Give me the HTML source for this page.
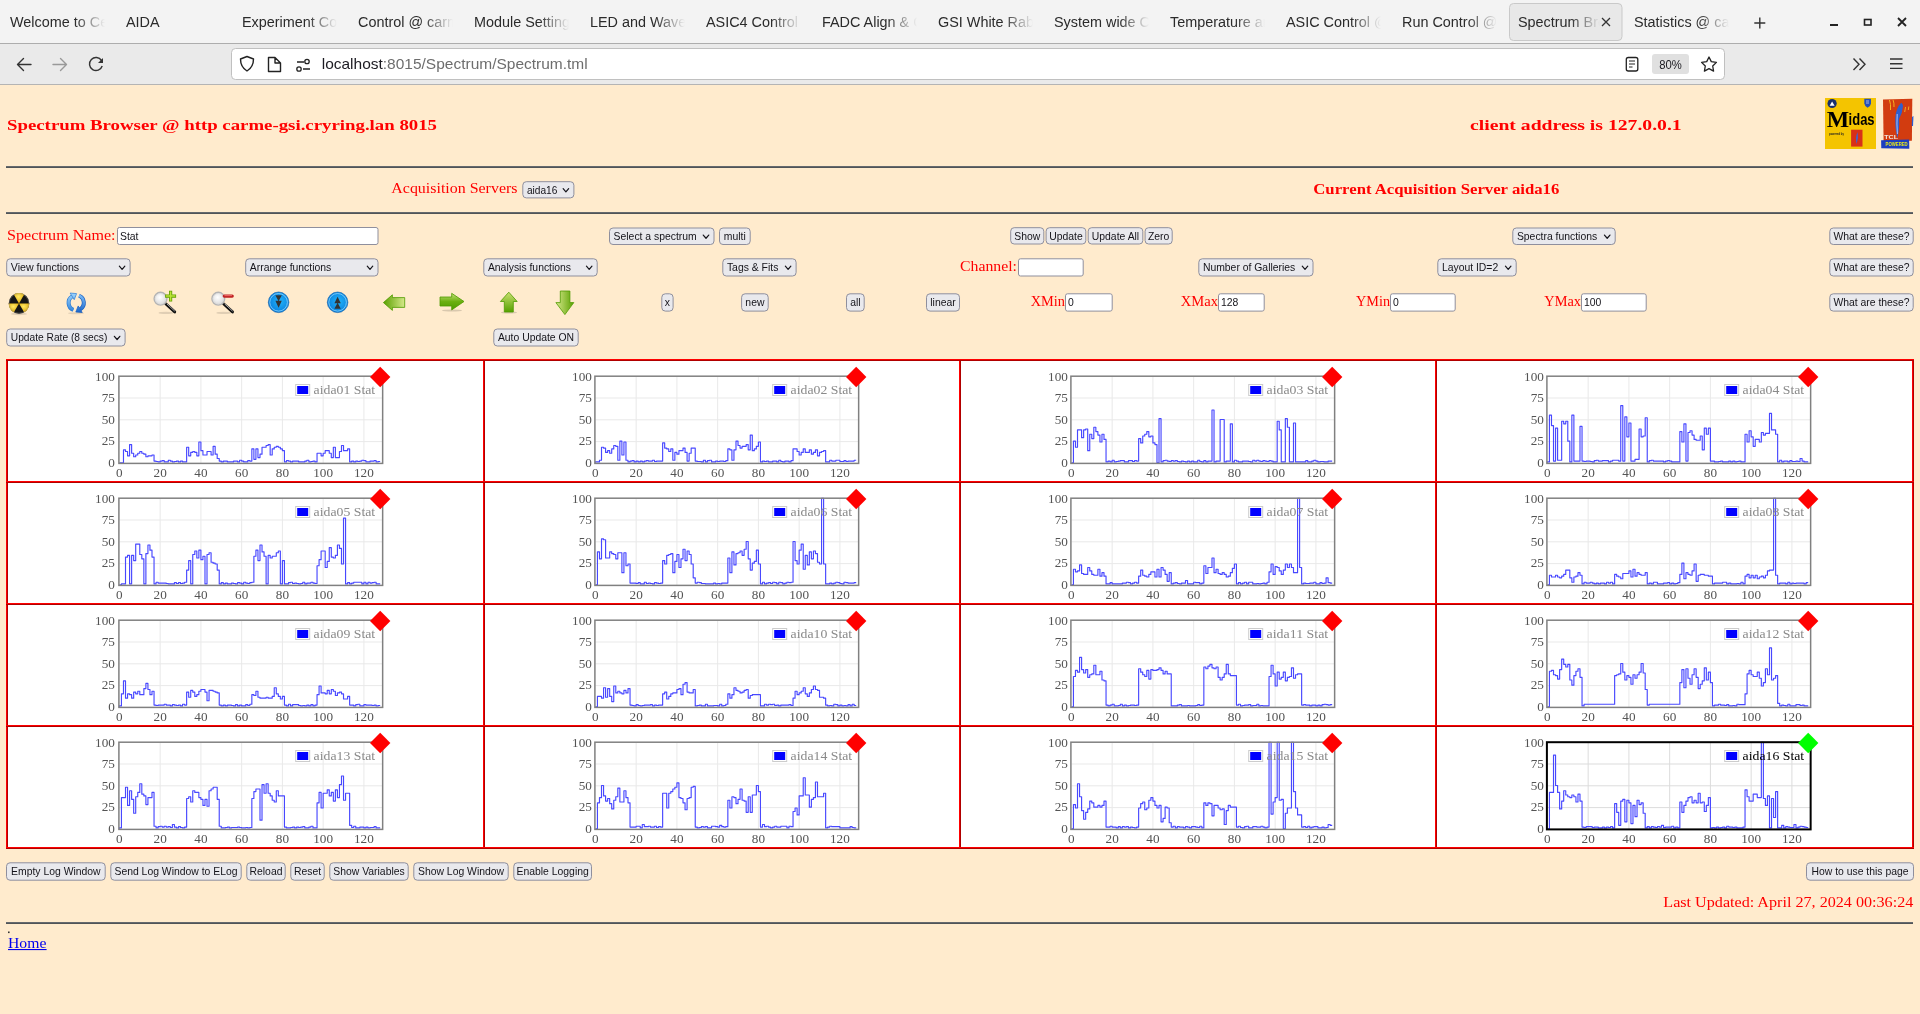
<!DOCTYPE html>
<html><head><meta charset="utf-8"><title>Spectrum Browser</title>
<style>html,body{margin:0;padding:0;background:#FFEBCD;overflow:hidden;width:1920px;height:1014px}svg{display:block;will-change:transform}</style>
</head><body><svg width="1920" height="1014" viewBox="0 0 1920 1014">
<rect x="0" y="0" width="1920" height="43" fill="#F3F3F3"/>
<rect x="0" y="43" width="1920" height="1" fill="#ADADAD"/>
<rect x="0" y="44" width="1920" height="40" fill="#EAEAEA"/>
<rect x="0" y="84" width="1920" height="1" fill="#B4B4B4"/>
<defs><linearGradient id="fade" x1="0" x2="1" y1="0" y2="0"><stop offset="0" stop-color="#F3F3F3" stop-opacity="0"/><stop offset="1" stop-color="#F3F3F3" stop-opacity="1"/></linearGradient><linearGradient id="fadeSel" x1="0" x2="1" y1="0" y2="0"><stop offset="0" stop-color="#E8E8E8" stop-opacity="0"/><stop offset="1" stop-color="#E8E8E8" stop-opacity="1"/></linearGradient></defs>
<rect x="1509.5" y="3.5" width="112.5" height="37" rx="4" fill="#E8E8E8" stroke="#C9C9C9" stroke-width="1"/>
<clipPath id="tabclip"><rect x="0" y="0" width="1" height="1"/></clipPath>
<clipPath id="tc0"><rect x="10" y="5" width="95" height="35"/></clipPath>
<g clip-path="url(#tc0)">
<text x="10.00" y="26.80" font-size="15.4" fill="#2b2b2b" font-family="'Liberation Sans', sans-serif" textLength="122.96" lengthAdjust="spacingAndGlyphs" >Welcome to Cerme</text>
</g>
<rect x="75" y="8" width="30" height="28" fill="url(#fade)"/>
<clipPath id="tc1"><rect x="126" y="5" width="95" height="35"/></clipPath>
<g clip-path="url(#tc1)">
<text x="126.00" y="26.80" font-size="15.4" fill="#2b2b2b" font-family="'Liberation Sans', sans-serif" textLength="33.61" lengthAdjust="spacingAndGlyphs" >AIDA</text>
</g>
<clipPath id="tc2"><rect x="242" y="5" width="95" height="35"/></clipPath>
<g clip-path="url(#tc2)">
<text x="242.00" y="26.80" font-size="15.4" fill="#2b2b2b" font-family="'Liberation Sans', sans-serif" textLength="123.24" lengthAdjust="spacingAndGlyphs" >Experiment Control</text>
</g>
<rect x="307" y="8" width="30" height="28" fill="url(#fade)"/>
<clipPath id="tc3"><rect x="358" y="5" width="95" height="35"/></clipPath>
<g clip-path="url(#tc3)">
<text x="358.00" y="26.80" font-size="15.4" fill="#2b2b2b" font-family="'Liberation Sans', sans-serif" textLength="109.04" lengthAdjust="spacingAndGlyphs" >Control @ carme</text>
</g>
<rect x="423" y="8" width="30" height="28" fill="url(#fade)"/>
<clipPath id="tc4"><rect x="474" y="5" width="95" height="35"/></clipPath>
<g clip-path="url(#tc4)">
<text x="474.00" y="26.80" font-size="15.4" fill="#2b2b2b" font-family="'Liberation Sans', sans-serif" textLength="103.25" lengthAdjust="spacingAndGlyphs" >Module Settings</text>
</g>
<rect x="539" y="8" width="30" height="28" fill="url(#fade)"/>
<clipPath id="tc5"><rect x="590" y="5" width="95" height="35"/></clipPath>
<g clip-path="url(#tc5)">
<text x="590.00" y="26.80" font-size="15.4" fill="#2b2b2b" font-family="'Liberation Sans', sans-serif" textLength="125.11" lengthAdjust="spacingAndGlyphs" >LED and Waveform</text>
</g>
<rect x="655" y="8" width="30" height="28" fill="url(#fade)"/>
<clipPath id="tc6"><rect x="706" y="5" width="95" height="35"/></clipPath>
<g clip-path="url(#tc6)">
<text x="706.00" y="26.80" font-size="15.4" fill="#2b2b2b" font-family="'Liberation Sans', sans-serif" textLength="110.65" lengthAdjust="spacingAndGlyphs" >ASIC4 Control @</text>
</g>
<rect x="771" y="8" width="30" height="28" fill="url(#fade)"/>
<clipPath id="tc7"><rect x="822" y="5" width="95" height="35"/></clipPath>
<g clip-path="url(#tc7)">
<text x="822.00" y="26.80" font-size="15.4" fill="#2b2b2b" font-family="'Liberation Sans', sans-serif" textLength="124.04" lengthAdjust="spacingAndGlyphs" >FADC Align &amp; Calib</text>
</g>
<rect x="887" y="8" width="30" height="28" fill="url(#fade)"/>
<clipPath id="tc8"><rect x="938" y="5" width="95" height="35"/></clipPath>
<g clip-path="url(#tc8)">
<text x="938.00" y="26.80" font-size="15.4" fill="#2b2b2b" font-family="'Liberation Sans', sans-serif" textLength="111.23" lengthAdjust="spacingAndGlyphs" >GSI White Rabbit</text>
</g>
<rect x="1003" y="8" width="30" height="28" fill="url(#fade)"/>
<clipPath id="tc9"><rect x="1054" y="5" width="95" height="35"/></clipPath>
<g clip-path="url(#tc9)">
<text x="1054.00" y="26.80" font-size="15.4" fill="#2b2b2b" font-family="'Liberation Sans', sans-serif" textLength="133.63" lengthAdjust="spacingAndGlyphs" >System wide Checks</text>
</g>
<rect x="1119" y="8" width="30" height="28" fill="url(#fade)"/>
<clipPath id="tc10"><rect x="1170" y="5" width="95" height="35"/></clipPath>
<g clip-path="url(#tc10)">
<text x="1170.00" y="26.80" font-size="15.4" fill="#2b2b2b" font-family="'Liberation Sans', sans-serif" textLength="108.86" lengthAdjust="spacingAndGlyphs" >Temperature and</text>
</g>
<rect x="1235" y="8" width="30" height="28" fill="url(#fade)"/>
<clipPath id="tc11"><rect x="1286" y="5" width="95" height="35"/></clipPath>
<g clip-path="url(#tc11)">
<text x="1286.00" y="26.80" font-size="15.4" fill="#2b2b2b" font-family="'Liberation Sans', sans-serif" textLength="146.65" lengthAdjust="spacingAndGlyphs" >ASIC Control @ carme</text>
</g>
<rect x="1351" y="8" width="30" height="28" fill="url(#fade)"/>
<clipPath id="tc12"><rect x="1402" y="5" width="95" height="35"/></clipPath>
<g clip-path="url(#tc12)">
<text x="1402.00" y="26.80" font-size="15.4" fill="#2b2b2b" font-family="'Liberation Sans', sans-serif" textLength="139.46" lengthAdjust="spacingAndGlyphs" >Run Control @ carme</text>
</g>
<rect x="1467" y="8" width="30" height="28" fill="url(#fade)"/>
<clipPath id="tc13"><rect x="1518" y="5" width="82" height="35"/></clipPath>
<g clip-path="url(#tc13)">
<text x="1518.00" y="26.80" font-size="15.4" fill="#2b2b2b" font-family="'Liberation Sans', sans-serif" textLength="118.43" lengthAdjust="spacingAndGlyphs" >Spectrum Browser</text>
</g>
<rect x="1570" y="8" width="30" height="28" fill="url(#fadeSel)"/>
<clipPath id="tc14"><rect x="1634" y="5" width="95" height="35"/></clipPath>
<g clip-path="url(#tc14)">
<text x="1634.00" y="26.80" font-size="15.4" fill="#2b2b2b" font-family="'Liberation Sans', sans-serif" textLength="120.23" lengthAdjust="spacingAndGlyphs" >Statistics @ carme</text>
</g>
<rect x="1699" y="8" width="30" height="28" fill="url(#fade)"/>
<path d="M1602 18 L1610 26 M1610 18 L1602 26" stroke="#333" stroke-width="1.3" fill="none"/>
<path d="M1759.8 17.5 V28.5 M1754.3 23 H1765.3" stroke="#333" stroke-width="1.4" fill="none"/>
<rect x="1830" y="24" width="8" height="2" fill="#222"/>
<rect x="1864.5" y="19.5" width="6.5" height="5.5" fill="none" stroke="#222" stroke-width="1.6"/>
<path d="M1898 18 L1906 26 M1906 18 L1898 26" stroke="#222" stroke-width="1.8" fill="none"/>
<path d="M17.5 64.5 H31 M17.5 64.5 L23.5 58.5 M17.5 64.5 L23.5 70.5" stroke="#333" stroke-width="1.4" fill="none" stroke-linecap="round"/>
<path d="M66.5 64.5 H53 M66.5 64.5 L60.5 58.5 M66.5 64.5 L60.5 70.5" stroke="#999" stroke-width="1.4" fill="none" stroke-linecap="round"/>
<path d="M101.5 60.5 A6.5 6.5 0 1 0 102.2 66" stroke="#333" stroke-width="1.4" fill="none"/>
<path d="M103 58 L103 63 L98 63 Z" fill="#333"/>
<rect x="231.5" y="48.5" width="1493" height="31" rx="4" fill="#FFFFFF" stroke="#C0C0C0" stroke-width="1"/>
<path d="M247 56.5 L253.5 59 Q253.5 67 247 71 Q240.5 67 240.5 59 Z" fill="none" stroke="#222" stroke-width="1.4" stroke-linejoin="round"/>
<path d="M268.5 57.5 H275 L280.5 63 V71.5 H268.5 Z M275 57.5 V63 H280.5" fill="none" stroke="#222" stroke-width="1.4" stroke-linejoin="round"/>
<path d="M297 62 H304 M303 69 H310" stroke="#222" stroke-width="1.4" fill="none"/>
<circle cx="307" cy="61.5" r="2.2" fill="none" stroke="#222" stroke-width="1.3"/>
<circle cx="299" cy="69" r="2.2" fill="none" stroke="#222" stroke-width="1.3"/>
<text x="321.7" y="68.8" font-size="15" font-family="'Liberation Sans', sans-serif" fill="#1c1b22" textLength="266" lengthAdjust="spacingAndGlyphs">localhost<tspan fill="#6d6d6d">:8015/Spectrum/Spectrum.tml</tspan></text>
<rect x="1626.3" y="57.5" width="11.5" height="13.5" rx="2" fill="none" stroke="#222" stroke-width="1.3"/>
<path d="M1629 61 H1635 M1629 64 H1635 M1629 67 H1632.5" stroke="#222" stroke-width="1.2"/>
<rect x="1652" y="54" width="37" height="20" rx="3" fill="#E0E0E0"/>
<text x="1659.30" y="68.70" font-size="12.3" fill="#1c1b22" font-family="'Liberation Sans', sans-serif" textLength="22.60" lengthAdjust="spacingAndGlyphs" >80%</text>
<polygon points="1709.00,57.00 1711.29,61.64 1716.42,62.39 1712.71,66.01 1713.58,71.11 1709.00,68.70 1704.42,71.11 1705.29,66.01 1701.58,62.39 1706.71,61.64" fill="none" stroke="#222" stroke-width="1.3" stroke-linejoin="round"/>
<path d="M1853.5 58.5 L1859 64.3 L1853.5 70 M1859.5 58.5 L1865 64.3 L1859.5 70" stroke="#333" stroke-width="1.4" fill="none"/>
<path d="M1890 59 H1902.5 M1890 63.7 H1902.5 M1890 68.4 H1902.5" stroke="#333" stroke-width="1.4" fill="none"/>
<rect x="0" y="85" width="1920" height="929" fill="#FFEBCD"/>
<text x="7.00" y="129.80" font-size="15.6" fill="#FF0000" font-family="'Liberation Serif', serif" font-weight="bold" textLength="430.00" lengthAdjust="spacingAndGlyphs" >Spectrum Browser @ http carme-gsi.cryring.lan 8015</text>
<text x="1470.00" y="129.80" font-size="15.6" fill="#FF0000" font-family="'Liberation Serif', serif" font-weight="bold" textLength="211.70" lengthAdjust="spacingAndGlyphs" >client address is 127.0.0.1</text>
<rect x="1825" y="98" width="51" height="51" fill="#F4C400"/>
<circle cx="1832.1" cy="103.5" r="4.6" fill="#18306E"/>
<path d="M1829.6 105.8 L1832.1 101.6 L1834.6 105.8 Z" fill="#FFFFFF"/>
<path d="M1864.3 98.8 H1871 V103.5 Q1870.5 106.5 1867.6 107.7 Q1864.8 106.5 1864.3 103.5 Z" fill="#2450B8"/>
<path d="M1866 101 h3 M1866 103 h3" stroke="#FFFFFF" stroke-width="0.6"/>
<text x="1826.80" y="126.60" font-size="23.5" fill="#000" font-family="'Liberation Serif', serif" font-weight="bold" textLength="22.40" lengthAdjust="spacingAndGlyphs" >M</text>
<text x="1848.60" y="124.60" font-size="15.8" fill="#000" font-family="'Liberation Sans', sans-serif" font-weight="bold" textLength="26.00" lengthAdjust="spacingAndGlyphs" >idas</text>
<text x="1829.00" y="135.00" font-size="3.2" fill="#222" font-family="'Liberation Sans', sans-serif" font-weight="bold" textLength="15.00" lengthAdjust="spacingAndGlyphs" >powered by</text>
<rect x="1851.1" y="129.7" width="11.4" height="16.9" fill="#D83018"/>
<path d="M1857.6 132 Q1855.2 137 1856.6 144 Q1858.8 138 1857.6 132 Z" fill="#3A64D8"/>
<path d="M1883 99.5 L1912.3 98.8 L1911.9 140.8 L1883.6 141.2 Z" fill="#D23C10"/>
<path d="M1889.5 100 Q1891 104 1890.5 110 M1893 99.8 Q1894.3 103 1894 107" stroke="#F5B020" stroke-width="1" fill="none"/>
<path d="M1905.5 107 l-0.8 5 M1908.8 106.5 l-0.5 3.5" stroke="#F5B020" stroke-width="0.9" fill="none"/>
<path d="M1901.2 102.8 Q1896 108 1895.2 118 Q1894.8 128 1897.3 138 Q1899.8 128 1899 119 Q1902.5 113 1903 106 Q1902.8 103.5 1901.2 102.8 Z" fill="#2E5ED0"/>
<path d="M1897.2 114 Q1896.6 124 1897.4 134" stroke="#E8EEFF" stroke-width="0.7" fill="none"/>
<path d="M1912 117 L1913.5 116 L1913 126 L1911.8 126 Z" fill="#2E5ED0"/>
<text x="1884.30" y="138.80" font-size="6.2" fill="#F0E8E0" font-family="'Liberation Sans', sans-serif" font-weight="bold" textLength="13.70" lengthAdjust="spacingAndGlyphs" >TCL</text>
<path d="M1881.1 140.2 L1909.1 139.6 L1909.3 148.7 L1881.3 148.2 Z" fill="#1D3EC0"/>
<text x="1885.60" y="146.30" font-size="5.0" fill="#E8E818" font-family="'Liberation Sans', sans-serif" font-weight="bold" textLength="22.10" lengthAdjust="spacingAndGlyphs" >POWERED</text>
<rect x="6" y="166" width="1907" height="1" fill="#65696D"/>
<rect x="6" y="167" width="1907" height="1" fill="#505457"/>
<rect x="6" y="212" width="1907" height="1" fill="#65696D"/>
<rect x="6" y="213" width="1907" height="1" fill="#505457"/>
<text x="391.30" y="193.20" font-size="14.2" fill="#FF0000" font-family="'Liberation Serif', serif" textLength="126.20" lengthAdjust="spacingAndGlyphs" >Acquisition Servers</text>
<rect x="522.80" y="181.70" width="51.10" height="16.20" rx="3.5" fill="#E9E9ED" stroke="#8F8F9D" stroke-width="1"/>
<text x="526.90" y="193.54" font-size="10.4" fill="#15141a" font-family="'Liberation Sans', sans-serif" textLength="30.50" lengthAdjust="spacingAndGlyphs" >aida16</text>
<path d="M563.15 188.60 L565.90 191.80 L568.65 188.60" fill="none" stroke="#15141a" stroke-width="1.2" stroke-linecap="round" stroke-linejoin="round"/>
<text x="1313.30" y="194.30" font-size="15.0" fill="#FF0000" font-family="'Liberation Serif', serif" font-weight="bold" textLength="246.00" lengthAdjust="spacingAndGlyphs" >Current Acquisition Server aida16</text>
<text x="7.00" y="239.70" font-size="14.2" fill="#FF0000" font-family="'Liberation Serif', serif" textLength="108.60" lengthAdjust="spacingAndGlyphs" >Spectrum Name:</text>
<rect x="117.50" y="227.50" width="260.50" height="17.00" rx="2" fill="#fff" stroke="#8F8F9D" stroke-width="1"/>
<text x="120.00" y="239.74" font-size="10.4" fill="#15141a" font-family="'Liberation Sans', sans-serif" >Stat</text>
<rect x="609.50" y="228.00" width="104.50" height="16.50" rx="3.5" fill="#E9E9ED" stroke="#8F8F9D" stroke-width="1"/>
<text x="613.60" y="239.99" font-size="10.4" fill="#15141a" font-family="'Liberation Sans', sans-serif" >Select a spectrum</text>
<path d="M703.25 235.05 L706.00 238.25 L708.75 235.05" fill="none" stroke="#15141a" stroke-width="1.2" stroke-linecap="round" stroke-linejoin="round"/>
<rect x="719.50" y="228.00" width="30.70" height="16.50" rx="3.5" fill="#E9E9ED" stroke="#8F8F9D" stroke-width="1"/>
<text x="734.85" y="239.99" font-size="10.4" fill="#15141a" font-family="'Liberation Sans', sans-serif" text-anchor="middle" >multi</text>
<rect x="1010.70" y="227.70" width="33.10" height="16.30" rx="3.5" fill="#E9E9ED" stroke="#8F8F9D" stroke-width="1"/>
<text x="1027.25" y="239.59" font-size="10.4" fill="#15141a" font-family="'Liberation Sans', sans-serif" text-anchor="middle" >Show</text>
<rect x="1046.10" y="227.70" width="39.70" height="16.30" rx="3.5" fill="#E9E9ED" stroke="#8F8F9D" stroke-width="1"/>
<text x="1065.95" y="239.59" font-size="10.4" fill="#15141a" font-family="'Liberation Sans', sans-serif" text-anchor="middle" >Update</text>
<rect x="1088.20" y="227.70" width="54.60" height="16.30" rx="3.5" fill="#E9E9ED" stroke="#8F8F9D" stroke-width="1"/>
<text x="1115.50" y="239.59" font-size="10.4" fill="#15141a" font-family="'Liberation Sans', sans-serif" text-anchor="middle" >Update All</text>
<rect x="1145.10" y="227.70" width="27.10" height="16.30" rx="3.5" fill="#E9E9ED" stroke="#8F8F9D" stroke-width="1"/>
<text x="1158.65" y="239.59" font-size="10.4" fill="#15141a" font-family="'Liberation Sans', sans-serif" text-anchor="middle" >Zero</text>
<rect x="1512.80" y="228.00" width="102.40" height="16.50" rx="3.5" fill="#E9E9ED" stroke="#8F8F9D" stroke-width="1"/>
<text x="1516.90" y="239.99" font-size="10.4" fill="#15141a" font-family="'Liberation Sans', sans-serif" >Spectra functions</text>
<path d="M1604.45 235.05 L1607.20 238.25 L1609.95 235.05" fill="none" stroke="#15141a" stroke-width="1.2" stroke-linecap="round" stroke-linejoin="round"/>
<rect x="1829.80" y="228.00" width="83.40" height="16.50" rx="3.5" fill="#E9E9ED" stroke="#8F8F9D" stroke-width="1"/>
<text x="1871.50" y="239.99" font-size="10.4" fill="#15141a" font-family="'Liberation Sans', sans-serif" text-anchor="middle" >What are these?</text>
<rect x="6.70" y="258.80" width="123.40" height="17.20" rx="3.5" fill="#E9E9ED" stroke="#8F8F9D" stroke-width="1"/>
<text x="10.80" y="271.14" font-size="10.4" fill="#15141a" font-family="'Liberation Sans', sans-serif" textLength="68.40" lengthAdjust="spacingAndGlyphs" >View functions</text>
<path d="M119.35 266.20 L122.10 269.40 L124.85 266.20" fill="none" stroke="#15141a" stroke-width="1.2" stroke-linecap="round" stroke-linejoin="round"/>
<rect x="245.70" y="258.80" width="132.30" height="17.20" rx="3.5" fill="#E9E9ED" stroke="#8F8F9D" stroke-width="1"/>
<text x="249.80" y="271.14" font-size="10.4" fill="#15141a" font-family="'Liberation Sans', sans-serif" >Arrange functions</text>
<path d="M367.25 266.20 L370.00 269.40 L372.75 266.20" fill="none" stroke="#15141a" stroke-width="1.2" stroke-linecap="round" stroke-linejoin="round"/>
<rect x="483.80" y="258.80" width="113.40" height="17.20" rx="3.5" fill="#E9E9ED" stroke="#8F8F9D" stroke-width="1"/>
<text x="487.90" y="271.14" font-size="10.4" fill="#15141a" font-family="'Liberation Sans', sans-serif" >Analysis functions</text>
<path d="M586.45 266.20 L589.20 269.40 L591.95 266.20" fill="none" stroke="#15141a" stroke-width="1.2" stroke-linecap="round" stroke-linejoin="round"/>
<rect x="722.80" y="258.80" width="73.30" height="17.20" rx="3.5" fill="#E9E9ED" stroke="#8F8F9D" stroke-width="1"/>
<text x="726.90" y="271.14" font-size="10.4" fill="#15141a" font-family="'Liberation Sans', sans-serif" textLength="51.50" lengthAdjust="spacingAndGlyphs" >Tags &amp; Fits</text>
<path d="M785.35 266.20 L788.10 269.40 L790.85 266.20" fill="none" stroke="#15141a" stroke-width="1.2" stroke-linecap="round" stroke-linejoin="round"/>
<text x="960.00" y="271.00" font-size="14.2" fill="#FF0000" font-family="'Liberation Serif', serif" textLength="57.00" lengthAdjust="spacingAndGlyphs" >Channel:</text>
<rect x="1018.50" y="258.80" width="64.70" height="17.20" rx="2" fill="#fff" stroke="#8F8F9D" stroke-width="1"/>
<rect x="1198.80" y="258.80" width="114.20" height="17.20" rx="3.5" fill="#E9E9ED" stroke="#8F8F9D" stroke-width="1"/>
<text x="1202.90" y="271.14" font-size="10.4" fill="#15141a" font-family="'Liberation Sans', sans-serif" >Number of Galleries</text>
<path d="M1302.25 266.20 L1305.00 269.40 L1307.75 266.20" fill="none" stroke="#15141a" stroke-width="1.2" stroke-linecap="round" stroke-linejoin="round"/>
<rect x="1437.80" y="258.80" width="78.40" height="17.20" rx="3.5" fill="#E9E9ED" stroke="#8F8F9D" stroke-width="1"/>
<text x="1441.90" y="271.14" font-size="10.4" fill="#15141a" font-family="'Liberation Sans', sans-serif" >Layout ID=2</text>
<path d="M1505.45 266.20 L1508.20 269.40 L1510.95 266.20" fill="none" stroke="#15141a" stroke-width="1.2" stroke-linecap="round" stroke-linejoin="round"/>
<rect x="1829.80" y="258.80" width="83.40" height="17.20" rx="3.5" fill="#E9E9ED" stroke="#8F8F9D" stroke-width="1"/>
<text x="1871.50" y="271.14" font-size="10.4" fill="#15141a" font-family="'Liberation Sans', sans-serif" text-anchor="middle" >What are these?</text>
<defs>
<radialGradient id="radG" cx="0.45" cy="0.35" r="0.7"><stop offset="0" stop-color="#FFE866"/><stop offset="1" stop-color="#E0A800"/></radialGradient>
<linearGradient id="blueG" gradientUnits="userSpaceOnUse" x1="0" y1="292" x2="0" y2="313"><stop offset="0" stop-color="#A6DAFF"/><stop offset="1" stop-color="#2A7ED8"/></linearGradient><linearGradient id="blueG2" gradientUnits="userSpaceOnUse" x1="0" y1="292" x2="0" y2="313"><stop offset="0" stop-color="#8CCBFF"/><stop offset="1" stop-color="#1763C8"/></linearGradient>
<radialGradient id="btnBlue" cx="0.55" cy="0.45" r="0.65"><stop offset="0" stop-color="#22B4FA"/><stop offset="0.75" stop-color="#0C86E0"/><stop offset="1" stop-color="#0A62C0"/></radialGradient>
<radialGradient id="lensG" cx="0.45" cy="0.4" r="0.6"><stop offset="0" stop-color="#FFFFFF"/><stop offset="1" stop-color="#D8D8D8"/></radialGradient>
<linearGradient id="grH" x1="0" y1="0" x2="1" y2="0"><stop offset="0" stop-color="#5AA000"/><stop offset="1" stop-color="#D6E88A"/></linearGradient>
<linearGradient id="grH2" x1="0" y1="0" x2="1" y2="0"><stop offset="0" stop-color="#D6E88A"/><stop offset="1" stop-color="#5AA000"/></linearGradient>
<linearGradient id="grV" x1="0" y1="0" x2="0" y2="1"><stop offset="0" stop-color="#C9E070"/><stop offset="1" stop-color="#55A000"/></linearGradient>
<linearGradient id="grV2" x1="0" y1="0" x2="0" y2="1"><stop offset="0" stop-color="#55A000"/><stop offset="1" stop-color="#D6E88A"/></linearGradient>
<linearGradient id="grR" x1="0" y1="0" x2="0" y2="1"><stop offset="0" stop-color="#C5E07A"/><stop offset="0.5" stop-color="#6BB010"/><stop offset="1" stop-color="#4E9A00"/></linearGradient>
</defs>
<ellipse cx="19" cy="313.9" rx="8" ry="1.3" fill="#000" opacity="0.12"/>
<circle cx="19" cy="303.4" r="10.3" fill="#151515"/>
<path d="M19 303.4 L13.85 294.48 A10.3 10.3 0 0 1 24.15 294.48 Z" fill="url(#radG)"/>
<path d="M19 303.4 L29.30 303.40 A10.3 10.3 0 0 1 24.15 312.32 Z" fill="url(#radG)"/>
<path d="M19 303.4 L13.85 312.32 A10.3 10.3 0 0 1 8.70 303.40 Z" fill="url(#radG)"/>
<circle cx="19" cy="303.4" r="9.700000000000001" fill="none" stroke="#888" stroke-width="0.6" opacity="0.6"/>
<path d="M73.35 309.85 A7.6 7.6 0 0 1 72.17 296.35" fill="none" stroke="#2A7AD4" stroke-width="4.0"/>
<path d="M73.35 309.85 A7.6 7.6 0 0 1 72.17 296.35" fill="none" stroke="url(#blueG)" stroke-width="2.6"/>
<path d="M70.11 293.05 L76.58 293.60 L74.24 299.66 Z" fill="url(#blueG)" stroke="#2A7AD4" stroke-width="0.7" stroke-linejoin="round"/>
<path d="M79.05 295.75 A7.6 7.6 0 0 1 80.23 309.25" fill="none" stroke="#1A5FC0" stroke-width="4.0"/>
<path d="M79.05 295.75 A7.6 7.6 0 0 1 80.23 309.25" fill="none" stroke="url(#blueG2)" stroke-width="2.6"/>
<path d="M82.29 312.55 L75.82 312.00 L78.16 305.94 Z" fill="url(#blueG2)" stroke="#1A5FC0" stroke-width="0.7" stroke-linejoin="round"/>
<ellipse cx="76" cy="313.3" rx="8" ry="1" fill="#000" opacity="0.1"/>
<ellipse cx="166.0" cy="312.9" rx="7.5" ry="1.1" fill="#000" opacity="0.12"/>
<path d="M165.7 303.7 L174.7 311.9" stroke="#111" stroke-width="2.9" stroke-linecap="round"/>
<path d="M167.1 304.09999999999997 L174.5 310.9" stroke="#E8E8E8" stroke-width="0.7" stroke-linecap="round"/>
<circle cx="160.5" cy="298.7" r="6.4" fill="url(#lensG)" stroke="#B4B4B4" stroke-width="1.4"/>
<circle cx="160.5" cy="298.7" r="5.2" fill="none" stroke="#D8D8D8" stroke-width="0.6"/>
<path d="M170.6 290.7 V301.5 M165.1 296.1 H176.1" stroke="#62A000" stroke-width="3.2"/>
<path d="M170.6 291.5 V300.7 M165.9 296.1 H175.3" stroke="#BCE438" stroke-width="1.5"/>
<ellipse cx="223.8" cy="312.9" rx="7.5" ry="1.1" fill="#000" opacity="0.12"/>
<path d="M223.5 303.7 L232.5 311.9" stroke="#111" stroke-width="2.9" stroke-linecap="round"/>
<path d="M224.9 304.09999999999997 L232.3 310.9" stroke="#E8E8E8" stroke-width="0.7" stroke-linecap="round"/>
<circle cx="218.3" cy="298.7" r="6.4" fill="url(#lensG)" stroke="#B4B4B4" stroke-width="1.4"/>
<circle cx="218.3" cy="298.7" r="5.2" fill="none" stroke="#D8D8D8" stroke-width="0.6"/>
<path d="M224.3 296.1 H232.2" stroke="#C02222" stroke-width="3.3" stroke-linecap="round"/>
<path d="M224.8 295.6 H231.6" stroke="#F07070" stroke-width="0.9" stroke-linecap="round"/>
<circle cx="278.6" cy="302.3" r="10.3" fill="url(#btnBlue)" stroke="#0A5AA8" stroke-width="0.6"/>
<circle cx="278.6" cy="302.3" r="8.8" fill="none" stroke="#9ADCFF" stroke-width="0.8" opacity="0.9"/>
<path d="M275.40000000000003 295.3 L281.8 295.3 L278.6 301.3 Z M275.40000000000003 300.8 L281.8 300.8 L278.6 307.8 Z" fill="#333"/>
<circle cx="337.6" cy="302.3" r="10.3" fill="url(#btnBlue)" stroke="#0A5AA8" stroke-width="0.6"/>
<circle cx="337.6" cy="302.3" r="8.8" fill="none" stroke="#9ADCFF" stroke-width="0.8" opacity="0.9"/>
<path d="M334.40000000000003 308.8 L340.8 308.8 L337.6 302.8 Z M334.40000000000003 303.3 L340.8 303.3 L337.6 296.8 Z" fill="#333"/>
<path d="M383.4 302.6 L392.4 294.8 L392.4 297.6 L404.7 297.6 L404.7 307.4 L392.4 307.4 L392.4 310.4 Z" fill="url(#grH)" stroke="#4E9A00" stroke-width="0.8" stroke-linejoin="round"/>
<ellipse cx="452" cy="310.5" rx="10" ry="1" fill="#000" opacity="0.15"/>
<path d="M464 301.5 L451.7 293.3 L451.7 297 L440 297 L440 306 L451.7 306 L451.7 309.9 Z" fill="url(#grR)" stroke="#4E9A00" stroke-width="0.8" stroke-linejoin="round"/>
<ellipse cx="509" cy="312.5" rx="8" ry="1" fill="#000" opacity="0.15"/>
<path d="M508.8 292.2 L517.2 301.5 L513.3 301.5 L513.3 312 L504.3 312 L504.3 301.5 L500.4 301.5 Z" fill="url(#grV)" stroke="#4E9A00" stroke-width="0.8" stroke-linejoin="round"/>
<path d="M564.9 314.6 L573.8 302.6 L569.9 302.6 L569.9 291 L560.3 291 L560.3 302.6 L555.9 302.6 Z" fill="url(#grH2)" stroke="#4E9A00" stroke-width="0.8" stroke-linejoin="round"/>
<rect x="661.80" y="293.80" width="11.30" height="17.30" rx="3.5" fill="#E9E9ED" stroke="#8F8F9D" stroke-width="1"/>
<text x="667.45" y="306.19" font-size="10.4" fill="#15141a" font-family="'Liberation Sans', sans-serif" text-anchor="middle" >x</text>
<rect x="741.60" y="293.80" width="26.60" height="17.30" rx="3.5" fill="#E9E9ED" stroke="#8F8F9D" stroke-width="1"/>
<text x="754.90" y="306.19" font-size="10.4" fill="#15141a" font-family="'Liberation Sans', sans-serif" text-anchor="middle" >new</text>
<rect x="846.50" y="293.80" width="17.70" height="17.30" rx="3.5" fill="#E9E9ED" stroke="#8F8F9D" stroke-width="1"/>
<text x="855.35" y="306.19" font-size="10.4" fill="#15141a" font-family="'Liberation Sans', sans-serif" text-anchor="middle" >all</text>
<rect x="926.50" y="293.80" width="33.00" height="17.30" rx="3.5" fill="#E9E9ED" stroke="#8F8F9D" stroke-width="1"/>
<text x="943.00" y="306.19" font-size="10.4" fill="#15141a" font-family="'Liberation Sans', sans-serif" text-anchor="middle" >linear</text>
<text x="1030.70" y="306.00" font-size="14.2" fill="#FF0000" font-family="'Liberation Serif', serif" textLength="34.30" lengthAdjust="spacingAndGlyphs" >XMin</text>
<rect x="1065.50" y="293.80" width="46.70" height="17.30" rx="2" fill="#fff" stroke="#8F8F9D" stroke-width="1"/>
<text x="1068.00" y="306.19" font-size="10.4" fill="#15141a" font-family="'Liberation Sans', sans-serif" >0</text>
<text x="1180.70" y="306.00" font-size="14.2" fill="#FF0000" font-family="'Liberation Serif', serif" textLength="37.30" lengthAdjust="spacingAndGlyphs" >XMax</text>
<rect x="1218.50" y="293.80" width="45.70" height="17.30" rx="2" fill="#fff" stroke="#8F8F9D" stroke-width="1"/>
<text x="1221.00" y="306.19" font-size="10.4" fill="#15141a" font-family="'Liberation Sans', sans-serif" >128</text>
<text x="1356.00" y="306.00" font-size="14.2" fill="#FF0000" font-family="'Liberation Serif', serif" textLength="34.00" lengthAdjust="spacingAndGlyphs" >YMin</text>
<rect x="1390.50" y="293.80" width="64.70" height="17.30" rx="2" fill="#fff" stroke="#8F8F9D" stroke-width="1"/>
<text x="1393.00" y="306.19" font-size="10.4" fill="#15141a" font-family="'Liberation Sans', sans-serif" >0</text>
<text x="1544.30" y="306.00" font-size="14.2" fill="#FF0000" font-family="'Liberation Serif', serif" textLength="36.70" lengthAdjust="spacingAndGlyphs" >YMax</text>
<rect x="1581.50" y="293.80" width="64.70" height="17.30" rx="2" fill="#fff" stroke="#8F8F9D" stroke-width="1"/>
<text x="1584.00" y="306.19" font-size="10.4" fill="#15141a" font-family="'Liberation Sans', sans-serif" >100</text>
<rect x="1829.80" y="293.80" width="83.40" height="17.30" rx="3.5" fill="#E9E9ED" stroke="#8F8F9D" stroke-width="1"/>
<text x="1871.50" y="306.19" font-size="10.4" fill="#15141a" font-family="'Liberation Sans', sans-serif" text-anchor="middle" >What are these?</text>
<rect x="6.70" y="329.00" width="118.40" height="17.00" rx="3.5" fill="#E9E9ED" stroke="#8F8F9D" stroke-width="1"/>
<text x="10.80" y="341.24" font-size="10.4" fill="#15141a" font-family="'Liberation Sans', sans-serif" textLength="96.50" lengthAdjust="spacingAndGlyphs" >Update Rate (8 secs)</text>
<path d="M114.35 336.30 L117.10 339.50 L119.85 336.30" fill="none" stroke="#15141a" stroke-width="1.2" stroke-linecap="round" stroke-linejoin="round"/>
<rect x="493.80" y="329.00" width="84.40" height="17.00" rx="3.5" fill="#E9E9ED" stroke="#8F8F9D" stroke-width="1"/>
<text x="536.00" y="341.24" font-size="10.4" fill="#15141a" font-family="'Liberation Sans', sans-serif" text-anchor="middle" >Auto Update ON</text>
<rect x="6.50" y="862.80" width="98.70" height="17.40" rx="3.5" fill="#E9E9ED" stroke="#8F8F9D" stroke-width="1"/>
<text x="55.85" y="875.24" font-size="10.4" fill="#15141a" font-family="'Liberation Sans', sans-serif" text-anchor="middle" >Empty Log Window</text>
<rect x="110.80" y="862.80" width="130.40" height="17.40" rx="3.5" fill="#E9E9ED" stroke="#8F8F9D" stroke-width="1"/>
<text x="176.00" y="875.24" font-size="10.4" fill="#15141a" font-family="'Liberation Sans', sans-serif" text-anchor="middle" >Send Log Window to ELog</text>
<rect x="246.80" y="862.80" width="38.40" height="17.40" rx="3.5" fill="#E9E9ED" stroke="#8F8F9D" stroke-width="1"/>
<text x="266.00" y="875.24" font-size="10.4" fill="#15141a" font-family="'Liberation Sans', sans-serif" text-anchor="middle" >Reload</text>
<rect x="290.80" y="862.80" width="33.40" height="17.40" rx="3.5" fill="#E9E9ED" stroke="#8F8F9D" stroke-width="1"/>
<text x="307.50" y="875.24" font-size="10.4" fill="#15141a" font-family="'Liberation Sans', sans-serif" text-anchor="middle" >Reset</text>
<rect x="329.80" y="862.80" width="78.40" height="17.40" rx="3.5" fill="#E9E9ED" stroke="#8F8F9D" stroke-width="1"/>
<text x="369.00" y="875.24" font-size="10.4" fill="#15141a" font-family="'Liberation Sans', sans-serif" text-anchor="middle" >Show Variables</text>
<rect x="413.80" y="862.80" width="94.40" height="17.40" rx="3.5" fill="#E9E9ED" stroke="#8F8F9D" stroke-width="1"/>
<text x="461.00" y="875.24" font-size="10.4" fill="#15141a" font-family="'Liberation Sans', sans-serif" text-anchor="middle" >Show Log Window</text>
<rect x="513.80" y="862.80" width="77.70" height="17.40" rx="3.5" fill="#E9E9ED" stroke="#8F8F9D" stroke-width="1"/>
<text x="552.65" y="875.24" font-size="10.4" fill="#15141a" font-family="'Liberation Sans', sans-serif" text-anchor="middle" >Enable Logging</text>
<rect x="1806.50" y="862.80" width="107.00" height="17.40" rx="3.5" fill="#E9E9ED" stroke="#8F8F9D" stroke-width="1"/>
<text x="1860.00" y="875.24" font-size="10.4" fill="#15141a" font-family="'Liberation Sans', sans-serif" text-anchor="middle" >How to use this page</text>
<text x="1663.30" y="906.70" font-size="14.2" fill="#FF0000" font-family="'Liberation Serif', serif" textLength="250.00" lengthAdjust="spacingAndGlyphs" >Last Updated: April 27, 2024 00:36:24</text>
<rect x="6" y="922" width="1907" height="1" fill="#65696D"/>
<rect x="6" y="923" width="1907" height="1" fill="#505457"/>
<rect x="8" y="931.5" width="1.6" height="1.6" fill="#333"/>
<text x="8.00" y="948.00" font-size="14.2" fill="#0000EE" font-family="'Liberation Serif', serif" textLength="38.40" lengthAdjust="spacingAndGlyphs" >Home</text>
<rect x="8" y="949" width="38.6" height="1.1" fill="#0000EE"/>
<rect x="6" y="359" width="1907" height="490" fill="#FFFFFF"/>
<rect x="6" y="359" width="1" height="490" fill="#FF0000"/>
<rect x="7" y="359" width="1" height="490" fill="#B00000"/>
<rect x="483" y="359" width="1" height="490" fill="#FF0000"/>
<rect x="484" y="359" width="1" height="490" fill="#B00000"/>
<rect x="959" y="359" width="1" height="490" fill="#FF0000"/>
<rect x="960" y="359" width="1" height="490" fill="#B00000"/>
<rect x="1435" y="359" width="1" height="490" fill="#FF0000"/>
<rect x="1436" y="359" width="1" height="490" fill="#B00000"/>
<rect x="1912" y="359" width="1" height="490" fill="#FF0000"/>
<rect x="1913" y="359" width="1" height="490" fill="#B00000"/>
<rect x="6" y="359" width="1908" height="1" fill="#FF0000"/>
<rect x="6" y="360" width="1908" height="1" fill="#B00000"/>
<rect x="6" y="481" width="1908" height="1" fill="#FF0000"/>
<rect x="6" y="482" width="1908" height="1" fill="#B00000"/>
<rect x="6" y="603" width="1908" height="1" fill="#FF0000"/>
<rect x="6" y="604" width="1908" height="1" fill="#B00000"/>
<rect x="6" y="725" width="1908" height="1" fill="#FF0000"/>
<rect x="6" y="726" width="1908" height="1" fill="#B00000"/>
<rect x="6" y="847" width="1908" height="1" fill="#FF0000"/>
<rect x="6" y="848" width="1908" height="1" fill="#B00000"/>
<rect x="159.65" y="376.20" width="1" height="87.20" fill="#E9E9E9"/>
<rect x="200.40" y="376.20" width="1" height="87.20" fill="#E9E9E9"/>
<rect x="241.15" y="376.20" width="1" height="87.20" fill="#E9E9E9"/>
<rect x="281.90" y="376.20" width="1" height="87.20" fill="#E9E9E9"/>
<rect x="322.65" y="376.20" width="1" height="87.20" fill="#E9E9E9"/>
<rect x="363.40" y="376.20" width="1" height="87.20" fill="#E9E9E9"/>
<rect x="119.40" y="441.10" width="263.25" height="1" fill="#E9E9E9"/>
<rect x="119.40" y="419.30" width="263.25" height="1" fill="#E9E9E9"/>
<rect x="119.40" y="397.50" width="263.25" height="1" fill="#E9E9E9"/>
<polyline points="119.40,462.80 119.40,462.80 121.44,462.80 121.44,462.80 123.48,462.80 123.48,449.81 125.51,449.81 125.51,451.54 127.55,451.54 127.55,455.87 129.59,455.87 129.59,444.61 131.62,444.61 131.62,453.27 133.66,453.27 133.66,456.74 135.70,456.74 135.70,455.01 137.74,455.01 137.74,453.27 139.78,453.27 139.78,451.54 141.81,451.54 141.81,453.27 143.85,453.27 143.85,454.14 145.89,454.14 145.89,456.74 147.93,456.74 147.93,455.87 149.96,455.87 149.96,455.87 152.00,455.87 152.00,455.01 154.04,455.01 154.04,461.07 156.08,461.07 156.08,461.50 158.11,461.50 158.11,461.93 160.15,461.93 160.15,461.07 162.19,461.07 162.19,460.63 164.23,460.63 164.23,461.93 166.26,461.93 166.26,461.93 168.30,461.93 168.30,460.20 170.34,460.20 170.34,461.07 172.38,461.07 172.38,461.93 174.41,461.93 174.41,461.50 176.45,461.50 176.45,461.07 178.49,461.07 178.49,461.93 180.53,461.93 180.53,461.07 182.56,461.07 182.56,461.93 184.60,461.93 184.60,461.93 186.64,461.93 186.64,447.21 188.68,447.21 188.68,455.87 190.71,455.87 190.71,452.41 192.75,452.41 192.75,451.54 194.79,451.54 194.79,452.41 196.82,452.41 196.82,455.87 198.86,455.87 198.86,442.02 200.90,442.02 200.90,450.68 202.94,450.68 202.94,455.01 204.98,455.01 204.98,455.01 207.01,455.01 207.01,451.54 209.05,451.54 209.05,451.54 211.09,451.54 211.09,455.01 213.12,455.01 213.12,446.35 215.16,446.35 215.16,454.14 217.20,454.14 217.20,458.47 219.24,458.47 219.24,461.07 221.28,461.07 221.28,461.93 223.31,461.93 223.31,461.07 225.35,461.07 225.35,461.07 227.39,461.07 227.39,461.93 229.43,461.93 229.43,461.93 231.46,461.93 231.46,461.93 233.50,461.93 233.50,461.07 235.54,461.07 235.54,461.07 237.58,461.07 237.58,461.93 239.61,461.93 239.61,460.20 241.65,460.20 241.65,461.07 243.69,461.07 243.69,461.93 245.73,461.93 245.73,461.93 247.76,461.93 247.76,460.63 249.80,460.63 249.80,461.07 251.84,461.07 251.84,448.94 253.88,448.94 253.88,459.34 255.91,459.34 255.91,448.94 257.95,448.94 257.95,457.60 259.99,457.60 259.99,454.14 262.02,454.14 262.02,447.21 264.06,447.21 264.06,447.21 266.10,447.21 266.10,445.48 268.14,445.48 268.14,444.61 270.18,444.61 270.18,455.01 272.21,455.01 272.21,448.94 274.25,448.94 274.25,447.21 276.29,447.21 276.29,446.35 278.33,446.35 278.33,447.21 280.36,447.21 280.36,448.94 282.40,448.94 282.40,450.68 284.44,450.68 284.44,461.93 286.48,461.93 286.48,460.63 288.51,460.63 288.51,461.07 290.55,461.07 290.55,461.93 292.59,461.93 292.59,461.07 294.62,461.07 294.62,461.07 296.66,461.07 296.66,461.07 298.70,461.07 298.70,461.93 300.74,461.93 300.74,461.93 302.77,461.93 302.77,461.93 304.81,461.93 304.81,461.07 306.85,461.07 306.85,460.20 308.89,460.20 308.89,461.93 310.93,461.93 310.93,461.50 312.96,461.50 312.96,461.07 315.00,461.07 315.00,461.93 317.04,461.93 317.04,453.27 319.08,453.27 319.08,453.27 321.11,453.27 321.11,455.87 323.15,455.87 323.15,453.27 325.19,453.27 325.19,450.68 327.23,450.68 327.23,450.68 329.26,450.68 329.26,453.27 331.30,453.27 331.30,457.60 333.34,457.60 333.34,447.21 335.38,447.21 335.38,457.60 337.41,457.60 337.41,457.60 339.45,457.60 339.45,451.54 341.49,451.54 341.49,445.48 343.52,445.48 343.52,450.68 345.56,450.68 345.56,450.68 347.60,450.68 347.60,448.94 349.64,448.94 349.64,461.93 351.68,461.93 351.68,461.07 353.71,461.07 353.71,461.93 355.75,461.93 355.75,461.07 357.79,461.07 357.79,461.50 359.83,461.50 359.83,461.07 361.86,461.07 361.86,460.20 363.90,460.20 363.90,460.63 365.94,460.63 365.94,461.93 367.98,461.93 367.98,461.93 370.01,461.93 370.01,461.07 372.05,461.07 372.05,461.07 374.09,461.07 374.09,460.63 376.12,460.63 376.12,461.93 378.16,461.93 378.16,461.50 380.20,461.50" fill="none" stroke="#4848FF" stroke-width="1.15" stroke-linejoin="round"/>
<rect x="118.90" y="376.20" width="263.75" height="87.20" fill="none" stroke="#808080" stroke-width="1.5"/>
<text x="114.90" y="466.90" font-size="12.2" fill="#545454" font-family="'Liberation Serif', serif" text-anchor="end" textLength="6.60" lengthAdjust="spacingAndGlyphs" >0</text>
<text x="114.90" y="445.35" font-size="12.2" fill="#545454" font-family="'Liberation Serif', serif" text-anchor="end" textLength="13.20" lengthAdjust="spacingAndGlyphs" >25</text>
<text x="114.90" y="423.80" font-size="12.2" fill="#545454" font-family="'Liberation Serif', serif" text-anchor="end" textLength="13.20" lengthAdjust="spacingAndGlyphs" >50</text>
<text x="114.90" y="402.25" font-size="12.2" fill="#545454" font-family="'Liberation Serif', serif" text-anchor="end" textLength="13.20" lengthAdjust="spacingAndGlyphs" >75</text>
<text x="114.90" y="380.70" font-size="12.2" fill="#545454" font-family="'Liberation Serif', serif" text-anchor="end" textLength="19.80" lengthAdjust="spacingAndGlyphs" >100</text>
<text x="119.40" y="477.00" font-size="12.2" fill="#545454" font-family="'Liberation Serif', serif" text-anchor="middle" textLength="6.60" lengthAdjust="spacingAndGlyphs" >0</text>
<text x="160.15" y="477.00" font-size="12.2" fill="#545454" font-family="'Liberation Serif', serif" text-anchor="middle" textLength="13.20" lengthAdjust="spacingAndGlyphs" >20</text>
<text x="200.90" y="477.00" font-size="12.2" fill="#545454" font-family="'Liberation Serif', serif" text-anchor="middle" textLength="13.20" lengthAdjust="spacingAndGlyphs" >40</text>
<text x="241.65" y="477.00" font-size="12.2" fill="#545454" font-family="'Liberation Serif', serif" text-anchor="middle" textLength="13.20" lengthAdjust="spacingAndGlyphs" >60</text>
<text x="282.40" y="477.00" font-size="12.2" fill="#545454" font-family="'Liberation Serif', serif" text-anchor="middle" textLength="13.20" lengthAdjust="spacingAndGlyphs" >80</text>
<text x="323.15" y="477.00" font-size="12.2" fill="#545454" font-family="'Liberation Serif', serif" text-anchor="middle" textLength="19.80" lengthAdjust="spacingAndGlyphs" >100</text>
<text x="363.90" y="477.00" font-size="12.2" fill="#545454" font-family="'Liberation Serif', serif" text-anchor="middle" textLength="19.80" lengthAdjust="spacingAndGlyphs" >120</text>
<rect x="295.70" y="384.50" width="14" height="11" fill="#FFFFFF" stroke="#CCCCCC" stroke-width="1"/>
<rect x="297.20" y="386.00" width="11" height="8" fill="#0000FF"/>
<text x="313.60" y="394.40" font-size="11.9" fill="#8A8A8A" font-family="'Liberation Serif', serif" textLength="61.60" lengthAdjust="spacingAndGlyphs" >aida01 Stat</text>
<path d="M380.20 366.80 L390.40 377.00 L380.20 387.20 L370.00 377.00 Z" fill="#FF0000"/>
<rect x="635.65" y="376.20" width="1" height="87.20" fill="#E9E9E9"/>
<rect x="676.40" y="376.20" width="1" height="87.20" fill="#E9E9E9"/>
<rect x="717.15" y="376.20" width="1" height="87.20" fill="#E9E9E9"/>
<rect x="757.90" y="376.20" width="1" height="87.20" fill="#E9E9E9"/>
<rect x="798.65" y="376.20" width="1" height="87.20" fill="#E9E9E9"/>
<rect x="839.40" y="376.20" width="1" height="87.20" fill="#E9E9E9"/>
<rect x="595.40" y="441.10" width="263.25" height="1" fill="#E9E9E9"/>
<rect x="595.40" y="419.30" width="263.25" height="1" fill="#E9E9E9"/>
<rect x="595.40" y="397.50" width="263.25" height="1" fill="#E9E9E9"/>
<polyline points="595.40,462.80 595.40,461.93 597.44,461.93 597.44,461.93 599.48,461.93 599.48,460.20 601.51,460.20 601.51,447.21 603.55,447.21 603.55,448.08 605.59,448.08 605.59,452.41 607.62,452.41 607.62,450.68 609.66,450.68 609.66,453.27 611.70,453.27 611.70,448.94 613.74,448.94 613.74,445.48 615.77,445.48 615.77,446.35 617.81,446.35 617.81,460.20 619.85,460.20 619.85,441.15 621.89,441.15 621.89,455.01 623.92,455.01 623.92,442.02 625.96,442.02 625.96,460.20 628.00,460.20 628.00,461.93 630.04,461.93 630.04,461.07 632.07,461.07 632.07,460.63 634.11,460.63 634.11,461.93 636.15,461.93 636.15,461.07 638.19,461.07 638.19,461.93 640.23,461.93 640.23,461.07 642.26,461.07 642.26,461.93 644.30,461.93 644.30,461.07 646.34,461.07 646.34,460.63 648.38,460.63 648.38,461.07 650.41,461.07 650.41,461.07 652.45,461.07 652.45,460.20 654.49,460.20 654.49,461.50 656.52,461.50 656.52,461.07 658.56,461.07 658.56,461.07 660.60,461.07 660.60,461.07 662.64,461.07 662.64,442.88 664.67,442.88 664.67,448.08 666.71,448.08 666.71,448.94 668.75,448.94 668.75,451.54 670.79,451.54 670.79,448.94 672.82,448.94 672.82,460.20 674.86,460.20 674.86,452.41 676.90,452.41 676.90,454.14 678.94,454.14 678.94,450.68 680.98,450.68 680.98,450.68 683.01,450.68 683.01,448.08 685.05,448.08 685.05,452.41 687.09,452.41 687.09,461.07 689.12,461.07 689.12,453.27 691.16,453.27 691.16,448.08 693.20,448.08 693.20,448.08 695.24,448.08 695.24,461.07 697.27,461.07 697.27,461.50 699.31,461.50 699.31,461.50 701.35,461.50 701.35,461.93 703.39,461.93 703.39,460.20 705.42,460.20 705.42,461.93 707.46,461.93 707.46,460.63 709.50,460.63 709.50,460.20 711.54,460.20 711.54,461.93 713.58,461.93 713.58,461.93 715.61,461.93 715.61,461.07 717.65,461.07 717.65,461.50 719.69,461.50 719.69,461.07 721.73,461.07 721.73,461.07 723.76,461.07 723.76,461.50 725.80,461.50 725.80,460.63 727.84,460.63 727.84,448.94 729.88,448.94 729.88,449.81 731.91,449.81 731.91,460.20 733.95,460.20 733.95,449.81 735.99,449.81 735.99,441.15 738.02,441.15 738.02,445.48 740.06,445.48 740.06,448.08 742.10,448.08 742.10,446.35 744.14,446.35 744.14,446.35 746.17,446.35 746.17,444.61 748.21,444.61 748.21,449.81 750.25,449.81 750.25,435.09 752.29,435.09 752.29,450.68 754.33,450.68 754.33,448.94 756.36,448.94 756.36,446.35 758.40,446.35 758.40,442.02 760.44,442.02 760.44,461.93 762.48,461.93 762.48,461.07 764.51,461.07 764.51,461.50 766.55,461.50 766.55,461.07 768.59,461.07 768.59,461.93 770.62,461.93 770.62,461.93 772.66,461.93 772.66,461.07 774.70,461.07 774.70,461.07 776.74,461.07 776.74,461.93 778.77,461.93 778.77,460.20 780.81,460.20 780.81,461.50 782.85,461.50 782.85,461.93 784.89,461.93 784.89,461.07 786.92,461.07 786.92,461.07 788.96,461.07 788.96,461.93 791.00,461.93 791.00,460.63 793.04,460.63 793.04,448.94 795.08,448.94 795.08,448.94 797.11,448.94 797.11,451.54 799.15,451.54 799.15,455.01 801.19,455.01 801.19,452.41 803.23,452.41 803.23,448.94 805.26,448.94 805.26,452.41 807.30,452.41 807.30,452.41 809.34,452.41 809.34,449.81 811.38,449.81 811.38,454.14 813.41,454.14 813.41,452.41 815.45,452.41 815.45,449.81 817.49,449.81 817.49,455.87 819.52,455.87 819.52,452.41 821.56,452.41 821.56,451.54 823.60,451.54 823.60,450.68 825.64,450.68 825.64,461.93 827.67,461.93 827.67,461.93 829.71,461.93 829.71,460.20 831.75,460.20 831.75,461.07 833.79,461.07 833.79,461.07 835.83,461.07 835.83,460.20 837.86,460.20 837.86,460.20 839.90,460.20 839.90,461.50 841.94,461.50 841.94,461.50 843.98,461.50 843.98,460.63 846.01,460.63 846.01,461.50 848.05,461.50 848.05,461.07 850.09,461.07 850.09,461.07 852.12,461.07 852.12,461.07 854.16,461.07 854.16,460.20 856.20,460.20" fill="none" stroke="#4848FF" stroke-width="1.15" stroke-linejoin="round"/>
<rect x="594.90" y="376.20" width="263.75" height="87.20" fill="none" stroke="#808080" stroke-width="1.5"/>
<text x="591.90" y="466.90" font-size="12.2" fill="#545454" font-family="'Liberation Serif', serif" text-anchor="end" textLength="6.60" lengthAdjust="spacingAndGlyphs" >0</text>
<text x="591.90" y="445.35" font-size="12.2" fill="#545454" font-family="'Liberation Serif', serif" text-anchor="end" textLength="13.20" lengthAdjust="spacingAndGlyphs" >25</text>
<text x="591.90" y="423.80" font-size="12.2" fill="#545454" font-family="'Liberation Serif', serif" text-anchor="end" textLength="13.20" lengthAdjust="spacingAndGlyphs" >50</text>
<text x="591.90" y="402.25" font-size="12.2" fill="#545454" font-family="'Liberation Serif', serif" text-anchor="end" textLength="13.20" lengthAdjust="spacingAndGlyphs" >75</text>
<text x="591.90" y="380.70" font-size="12.2" fill="#545454" font-family="'Liberation Serif', serif" text-anchor="end" textLength="19.80" lengthAdjust="spacingAndGlyphs" >100</text>
<text x="595.40" y="477.00" font-size="12.2" fill="#545454" font-family="'Liberation Serif', serif" text-anchor="middle" textLength="6.60" lengthAdjust="spacingAndGlyphs" >0</text>
<text x="636.15" y="477.00" font-size="12.2" fill="#545454" font-family="'Liberation Serif', serif" text-anchor="middle" textLength="13.20" lengthAdjust="spacingAndGlyphs" >20</text>
<text x="676.90" y="477.00" font-size="12.2" fill="#545454" font-family="'Liberation Serif', serif" text-anchor="middle" textLength="13.20" lengthAdjust="spacingAndGlyphs" >40</text>
<text x="717.65" y="477.00" font-size="12.2" fill="#545454" font-family="'Liberation Serif', serif" text-anchor="middle" textLength="13.20" lengthAdjust="spacingAndGlyphs" >60</text>
<text x="758.40" y="477.00" font-size="12.2" fill="#545454" font-family="'Liberation Serif', serif" text-anchor="middle" textLength="13.20" lengthAdjust="spacingAndGlyphs" >80</text>
<text x="799.15" y="477.00" font-size="12.2" fill="#545454" font-family="'Liberation Serif', serif" text-anchor="middle" textLength="19.80" lengthAdjust="spacingAndGlyphs" >100</text>
<text x="839.90" y="477.00" font-size="12.2" fill="#545454" font-family="'Liberation Serif', serif" text-anchor="middle" textLength="19.80" lengthAdjust="spacingAndGlyphs" >120</text>
<rect x="772.70" y="384.50" width="14" height="11" fill="#FFFFFF" stroke="#CCCCCC" stroke-width="1"/>
<rect x="774.20" y="386.00" width="11" height="8" fill="#0000FF"/>
<text x="790.60" y="394.40" font-size="11.9" fill="#8A8A8A" font-family="'Liberation Serif', serif" textLength="61.60" lengthAdjust="spacingAndGlyphs" >aida02 Stat</text>
<path d="M856.20 366.80 L866.40 377.00 L856.20 387.20 L846.00 377.00 Z" fill="#FF0000"/>
<rect x="1111.65" y="376.20" width="1" height="87.20" fill="#E9E9E9"/>
<rect x="1152.40" y="376.20" width="1" height="87.20" fill="#E9E9E9"/>
<rect x="1193.15" y="376.20" width="1" height="87.20" fill="#E9E9E9"/>
<rect x="1233.90" y="376.20" width="1" height="87.20" fill="#E9E9E9"/>
<rect x="1274.65" y="376.20" width="1" height="87.20" fill="#E9E9E9"/>
<rect x="1315.40" y="376.20" width="1" height="87.20" fill="#E9E9E9"/>
<rect x="1071.40" y="441.10" width="263.24" height="1" fill="#E9E9E9"/>
<rect x="1071.40" y="419.30" width="263.24" height="1" fill="#E9E9E9"/>
<rect x="1071.40" y="397.50" width="263.24" height="1" fill="#E9E9E9"/>
<polyline points="1071.40,462.80 1071.40,462.80 1073.44,462.80 1073.44,441.15 1075.48,441.15 1075.48,447.21 1077.51,447.21 1077.51,429.89 1079.55,429.89 1079.55,429.89 1081.59,429.89 1081.59,437.69 1083.62,437.69 1083.62,429.89 1085.66,429.89 1085.66,429.03 1087.70,429.03 1087.70,450.68 1089.74,450.68 1089.74,434.22 1091.78,434.22 1091.78,438.55 1093.81,438.55 1093.81,427.29 1095.85,427.29 1095.85,431.62 1097.89,431.62 1097.89,435.09 1099.93,435.09 1099.93,442.02 1101.96,442.02 1101.96,434.22 1104.00,434.22 1104.00,439.42 1106.04,439.42 1106.04,461.93 1108.08,461.93 1108.08,461.07 1110.11,461.07 1110.11,461.93 1112.15,461.93 1112.15,460.20 1114.19,460.20 1114.19,461.93 1116.23,461.93 1116.23,461.50 1118.26,461.50 1118.26,461.07 1120.30,461.07 1120.30,460.63 1122.34,460.63 1122.34,460.63 1124.38,460.63 1124.38,461.93 1126.41,461.93 1126.41,461.93 1128.45,461.93 1128.45,460.63 1130.49,460.63 1130.49,460.63 1132.53,460.63 1132.53,461.50 1134.56,461.50 1134.56,460.63 1136.60,460.63 1136.60,461.07 1138.64,461.07 1138.64,438.55 1140.68,438.55 1140.68,442.88 1142.71,442.88 1142.71,435.95 1144.75,435.95 1144.75,434.22 1146.79,434.22 1146.79,431.62 1148.83,431.62 1148.83,436.82 1150.86,436.82 1150.86,435.95 1152.90,435.95 1152.90,442.88 1154.94,442.88 1154.94,444.61 1156.98,444.61 1156.98,462.80 1159.01,462.80 1159.01,418.63 1161.05,418.63 1161.05,461.93 1163.09,461.93 1163.09,460.63 1165.12,460.63 1165.12,460.20 1167.16,460.20 1167.16,461.07 1169.20,461.07 1169.20,461.50 1171.24,461.50 1171.24,460.63 1173.28,460.63 1173.28,461.07 1175.31,461.07 1175.31,460.63 1177.35,460.63 1177.35,461.50 1179.39,461.50 1179.39,461.93 1181.43,461.93 1181.43,461.07 1183.46,461.07 1183.46,461.50 1185.50,461.50 1185.50,461.93 1187.54,461.93 1187.54,461.07 1189.58,461.07 1189.58,461.93 1191.61,461.93 1191.61,461.07 1193.65,461.07 1193.65,461.93 1195.69,461.93 1195.69,461.93 1197.73,461.93 1197.73,460.20 1199.76,460.20 1199.76,461.50 1201.80,461.50 1201.80,461.93 1203.84,461.93 1203.84,460.63 1205.88,460.63 1205.88,461.93 1207.91,461.93 1207.91,461.07 1209.95,461.07 1209.95,461.07 1211.99,461.07 1211.99,409.97 1214.03,409.97 1214.03,461.93 1216.06,461.93 1216.06,461.07 1218.10,461.07 1218.10,461.07 1220.14,461.07 1220.14,419.50 1222.18,419.50 1222.18,419.50 1224.21,419.50 1224.21,461.93 1226.25,461.93 1226.25,461.07 1228.29,461.07 1228.29,461.07 1230.33,461.07 1230.33,423.83 1232.36,423.83 1232.36,461.93 1234.40,461.93 1234.40,460.20 1236.44,460.20 1236.44,461.07 1238.48,461.07 1238.48,461.93 1240.51,461.93 1240.51,461.93 1242.55,461.93 1242.55,461.07 1244.59,461.07 1244.59,461.07 1246.62,461.07 1246.62,461.07 1248.66,461.07 1248.66,461.50 1250.70,461.50 1250.70,461.93 1252.74,461.93 1252.74,460.20 1254.78,460.20 1254.78,461.07 1256.81,461.07 1256.81,460.20 1258.85,460.20 1258.85,461.07 1260.89,461.07 1260.89,461.50 1262.93,461.50 1262.93,460.63 1264.96,460.63 1264.96,461.07 1267.00,461.07 1267.00,461.50 1269.04,461.50 1269.04,460.63 1271.08,460.63 1271.08,461.07 1273.11,461.07 1273.11,461.93 1275.15,461.93 1275.15,461.93 1277.19,461.93 1277.19,421.23 1279.23,421.23 1279.23,429.89 1281.26,429.89 1281.26,461.93 1283.30,461.93 1283.30,461.93 1285.34,461.93 1285.34,418.63 1287.38,418.63 1287.38,427.29 1289.41,427.29 1289.41,461.93 1291.45,461.93 1291.45,461.93 1293.49,461.93 1293.49,422.96 1295.53,422.96 1295.53,461.93 1297.56,461.93 1297.56,461.93 1299.60,461.93 1299.60,461.93 1301.64,461.93 1301.64,461.93 1303.68,461.93 1303.68,461.93 1305.71,461.93 1305.71,460.63 1307.75,460.63 1307.75,461.93 1309.79,461.93 1309.79,461.93 1311.83,461.93 1311.83,461.07 1313.86,461.07 1313.86,460.20 1315.90,460.20 1315.90,461.07 1317.94,461.07 1317.94,461.93 1319.98,461.93 1319.98,461.50 1322.01,461.50 1322.01,461.50 1324.05,461.50 1324.05,461.93 1326.09,461.93 1326.09,461.93 1328.12,461.93 1328.12,461.07 1330.16,461.07 1330.16,461.07 1332.20,461.07" fill="none" stroke="#4848FF" stroke-width="1.15" stroke-linejoin="round"/>
<rect x="1070.90" y="376.20" width="263.74" height="87.20" fill="none" stroke="#808080" stroke-width="1.5"/>
<text x="1067.90" y="466.90" font-size="12.2" fill="#545454" font-family="'Liberation Serif', serif" text-anchor="end" textLength="6.60" lengthAdjust="spacingAndGlyphs" >0</text>
<text x="1067.90" y="445.35" font-size="12.2" fill="#545454" font-family="'Liberation Serif', serif" text-anchor="end" textLength="13.20" lengthAdjust="spacingAndGlyphs" >25</text>
<text x="1067.90" y="423.80" font-size="12.2" fill="#545454" font-family="'Liberation Serif', serif" text-anchor="end" textLength="13.20" lengthAdjust="spacingAndGlyphs" >50</text>
<text x="1067.90" y="402.25" font-size="12.2" fill="#545454" font-family="'Liberation Serif', serif" text-anchor="end" textLength="13.20" lengthAdjust="spacingAndGlyphs" >75</text>
<text x="1067.90" y="380.70" font-size="12.2" fill="#545454" font-family="'Liberation Serif', serif" text-anchor="end" textLength="19.80" lengthAdjust="spacingAndGlyphs" >100</text>
<text x="1071.40" y="477.00" font-size="12.2" fill="#545454" font-family="'Liberation Serif', serif" text-anchor="middle" textLength="6.60" lengthAdjust="spacingAndGlyphs" >0</text>
<text x="1112.15" y="477.00" font-size="12.2" fill="#545454" font-family="'Liberation Serif', serif" text-anchor="middle" textLength="13.20" lengthAdjust="spacingAndGlyphs" >20</text>
<text x="1152.90" y="477.00" font-size="12.2" fill="#545454" font-family="'Liberation Serif', serif" text-anchor="middle" textLength="13.20" lengthAdjust="spacingAndGlyphs" >40</text>
<text x="1193.65" y="477.00" font-size="12.2" fill="#545454" font-family="'Liberation Serif', serif" text-anchor="middle" textLength="13.20" lengthAdjust="spacingAndGlyphs" >60</text>
<text x="1234.40" y="477.00" font-size="12.2" fill="#545454" font-family="'Liberation Serif', serif" text-anchor="middle" textLength="13.20" lengthAdjust="spacingAndGlyphs" >80</text>
<text x="1275.15" y="477.00" font-size="12.2" fill="#545454" font-family="'Liberation Serif', serif" text-anchor="middle" textLength="19.80" lengthAdjust="spacingAndGlyphs" >100</text>
<text x="1315.90" y="477.00" font-size="12.2" fill="#545454" font-family="'Liberation Serif', serif" text-anchor="middle" textLength="19.80" lengthAdjust="spacingAndGlyphs" >120</text>
<rect x="1248.70" y="384.50" width="14" height="11" fill="#FFFFFF" stroke="#CCCCCC" stroke-width="1"/>
<rect x="1250.20" y="386.00" width="11" height="8" fill="#0000FF"/>
<text x="1266.60" y="394.40" font-size="11.9" fill="#8A8A8A" font-family="'Liberation Serif', serif" textLength="61.60" lengthAdjust="spacingAndGlyphs" >aida03 Stat</text>
<path d="M1332.20 366.80 L1342.40 377.00 L1332.20 387.20 L1322.00 377.00 Z" fill="#FF0000"/>
<rect x="1587.65" y="376.20" width="1" height="87.20" fill="#E9E9E9"/>
<rect x="1628.40" y="376.20" width="1" height="87.20" fill="#E9E9E9"/>
<rect x="1669.15" y="376.20" width="1" height="87.20" fill="#E9E9E9"/>
<rect x="1709.90" y="376.20" width="1" height="87.20" fill="#E9E9E9"/>
<rect x="1750.65" y="376.20" width="1" height="87.20" fill="#E9E9E9"/>
<rect x="1791.40" y="376.20" width="1" height="87.20" fill="#E9E9E9"/>
<rect x="1547.40" y="441.10" width="263.24" height="1" fill="#E9E9E9"/>
<rect x="1547.40" y="419.30" width="263.24" height="1" fill="#E9E9E9"/>
<rect x="1547.40" y="397.50" width="263.24" height="1" fill="#E9E9E9"/>
<polyline points="1547.40,462.80 1547.40,461.93 1549.44,461.93 1549.44,415.17 1551.48,415.17 1551.48,425.56 1553.51,425.56 1553.51,461.07 1555.55,461.07 1555.55,428.16 1557.59,428.16 1557.59,460.20 1559.62,460.20 1559.62,460.20 1561.66,460.20 1561.66,421.23 1563.70,421.23 1563.70,423.83 1565.74,423.83 1565.74,421.23 1567.78,421.23 1567.78,441.15 1569.81,441.15 1569.81,461.93 1571.85,461.93 1571.85,415.17 1573.89,415.17 1573.89,461.07 1575.93,461.07 1575.93,461.07 1577.96,461.07 1577.96,461.07 1580.00,461.07 1580.00,426.43 1582.04,426.43 1582.04,461.07 1584.08,461.07 1584.08,461.50 1586.11,461.50 1586.11,461.07 1588.15,461.07 1588.15,461.07 1590.19,461.07 1590.19,461.50 1592.23,461.50 1592.23,461.93 1594.26,461.93 1594.26,460.63 1596.30,460.63 1596.30,460.20 1598.34,460.20 1598.34,461.07 1600.38,461.07 1600.38,461.07 1602.41,461.07 1602.41,460.63 1604.45,460.63 1604.45,460.63 1606.49,460.63 1606.49,460.63 1608.53,460.63 1608.53,461.93 1610.56,461.93 1610.56,461.07 1612.60,461.07 1612.60,460.20 1614.64,460.20 1614.64,460.20 1616.68,460.20 1616.68,460.20 1618.71,460.20 1618.71,461.07 1620.75,461.07 1620.75,405.64 1622.79,405.64 1622.79,461.07 1624.83,461.07 1624.83,416.90 1626.86,416.90 1626.86,436.82 1628.90,436.82 1628.90,422.96 1630.94,422.96 1630.94,461.07 1632.98,461.07 1632.98,461.07 1635.01,461.07 1635.01,459.34 1637.05,459.34 1637.05,459.34 1639.09,459.34 1639.09,429.03 1641.12,429.03 1641.12,436.82 1643.16,436.82 1643.16,435.95 1645.20,435.95 1645.20,417.77 1647.24,417.77 1647.24,461.93 1649.28,461.93 1649.28,460.63 1651.31,460.63 1651.31,460.20 1653.35,460.20 1653.35,461.07 1655.39,461.07 1655.39,461.07 1657.43,461.07 1657.43,461.07 1659.46,461.07 1659.46,461.07 1661.50,461.07 1661.50,461.07 1663.54,461.07 1663.54,461.93 1665.58,461.93 1665.58,461.07 1667.61,461.07 1667.61,460.63 1669.65,460.63 1669.65,461.07 1671.69,461.07 1671.69,461.93 1673.73,461.93 1673.73,461.93 1675.76,461.93 1675.76,461.93 1677.80,461.93 1677.80,461.93 1679.84,461.93 1679.84,431.62 1681.88,431.62 1681.88,442.02 1683.91,442.02 1683.91,423.83 1685.95,423.83 1685.95,461.07 1687.99,461.07 1687.99,432.49 1690.03,432.49 1690.03,430.76 1692.06,430.76 1692.06,435.09 1694.10,435.09 1694.10,439.42 1696.14,439.42 1696.14,440.28 1698.18,440.28 1698.18,440.28 1700.21,440.28 1700.21,435.95 1702.25,435.95 1702.25,449.81 1704.29,449.81 1704.29,428.16 1706.33,428.16 1706.33,434.22 1708.36,434.22 1708.36,428.16 1710.40,428.16 1710.40,461.07 1712.44,461.07 1712.44,461.07 1714.48,461.07 1714.48,461.93 1716.51,461.93 1716.51,461.93 1718.55,461.93 1718.55,461.50 1720.59,461.50 1720.59,461.07 1722.62,461.07 1722.62,461.93 1724.66,461.93 1724.66,461.93 1726.70,461.93 1726.70,461.93 1728.74,461.93 1728.74,461.07 1730.78,461.07 1730.78,461.93 1732.81,461.93 1732.81,461.07 1734.85,461.07 1734.85,461.93 1736.89,461.93 1736.89,461.50 1738.93,461.50 1738.93,461.07 1740.96,461.07 1740.96,461.93 1743.00,461.93 1743.00,461.93 1745.04,461.93 1745.04,434.22 1747.08,434.22 1747.08,442.02 1749.11,442.02 1749.11,430.76 1751.15,430.76 1751.15,436.82 1753.19,436.82 1753.19,446.35 1755.23,446.35 1755.23,439.42 1757.26,439.42 1757.26,439.42 1759.30,439.42 1759.30,442.02 1761.34,442.02 1761.34,432.49 1763.38,432.49 1763.38,435.09 1765.41,435.09 1765.41,433.36 1767.45,433.36 1767.45,433.36 1769.49,433.36 1769.49,413.44 1771.53,413.44 1771.53,429.89 1773.56,429.89 1773.56,429.89 1775.60,429.89 1775.60,434.22 1777.64,434.22 1777.64,461.93 1779.68,461.93 1779.68,460.20 1781.71,460.20 1781.71,461.93 1783.75,461.93 1783.75,461.07 1785.79,461.07 1785.79,461.07 1787.83,461.07 1787.83,461.93 1789.86,461.93 1789.86,460.63 1791.90,460.63 1791.90,461.50 1793.94,461.50 1793.94,461.50 1795.98,461.50 1795.98,461.07 1798.01,461.07 1798.01,461.50 1800.05,461.50 1800.05,458.47 1802.09,458.47 1802.09,461.07 1804.12,461.07 1804.12,461.93 1806.16,461.93 1806.16,461.93 1808.20,461.93" fill="none" stroke="#4848FF" stroke-width="1.15" stroke-linejoin="round"/>
<rect x="1546.90" y="376.20" width="263.74" height="87.20" fill="none" stroke="#808080" stroke-width="1.5"/>
<text x="1543.90" y="466.90" font-size="12.2" fill="#545454" font-family="'Liberation Serif', serif" text-anchor="end" textLength="6.60" lengthAdjust="spacingAndGlyphs" >0</text>
<text x="1543.90" y="445.35" font-size="12.2" fill="#545454" font-family="'Liberation Serif', serif" text-anchor="end" textLength="13.20" lengthAdjust="spacingAndGlyphs" >25</text>
<text x="1543.90" y="423.80" font-size="12.2" fill="#545454" font-family="'Liberation Serif', serif" text-anchor="end" textLength="13.20" lengthAdjust="spacingAndGlyphs" >50</text>
<text x="1543.90" y="402.25" font-size="12.2" fill="#545454" font-family="'Liberation Serif', serif" text-anchor="end" textLength="13.20" lengthAdjust="spacingAndGlyphs" >75</text>
<text x="1543.90" y="380.70" font-size="12.2" fill="#545454" font-family="'Liberation Serif', serif" text-anchor="end" textLength="19.80" lengthAdjust="spacingAndGlyphs" >100</text>
<text x="1547.40" y="477.00" font-size="12.2" fill="#545454" font-family="'Liberation Serif', serif" text-anchor="middle" textLength="6.60" lengthAdjust="spacingAndGlyphs" >0</text>
<text x="1588.15" y="477.00" font-size="12.2" fill="#545454" font-family="'Liberation Serif', serif" text-anchor="middle" textLength="13.20" lengthAdjust="spacingAndGlyphs" >20</text>
<text x="1628.90" y="477.00" font-size="12.2" fill="#545454" font-family="'Liberation Serif', serif" text-anchor="middle" textLength="13.20" lengthAdjust="spacingAndGlyphs" >40</text>
<text x="1669.65" y="477.00" font-size="12.2" fill="#545454" font-family="'Liberation Serif', serif" text-anchor="middle" textLength="13.20" lengthAdjust="spacingAndGlyphs" >60</text>
<text x="1710.40" y="477.00" font-size="12.2" fill="#545454" font-family="'Liberation Serif', serif" text-anchor="middle" textLength="13.20" lengthAdjust="spacingAndGlyphs" >80</text>
<text x="1751.15" y="477.00" font-size="12.2" fill="#545454" font-family="'Liberation Serif', serif" text-anchor="middle" textLength="19.80" lengthAdjust="spacingAndGlyphs" >100</text>
<text x="1791.90" y="477.00" font-size="12.2" fill="#545454" font-family="'Liberation Serif', serif" text-anchor="middle" textLength="19.80" lengthAdjust="spacingAndGlyphs" >120</text>
<rect x="1724.70" y="384.50" width="14" height="11" fill="#FFFFFF" stroke="#CCCCCC" stroke-width="1"/>
<rect x="1726.20" y="386.00" width="11" height="8" fill="#0000FF"/>
<text x="1742.60" y="394.40" font-size="11.9" fill="#8A8A8A" font-family="'Liberation Serif', serif" textLength="61.60" lengthAdjust="spacingAndGlyphs" >aida04 Stat</text>
<path d="M1808.20 366.80 L1818.40 377.00 L1808.20 387.20 L1798.00 377.00 Z" fill="#FF0000"/>
<rect x="159.65" y="498.20" width="1" height="87.20" fill="#E9E9E9"/>
<rect x="200.40" y="498.20" width="1" height="87.20" fill="#E9E9E9"/>
<rect x="241.15" y="498.20" width="1" height="87.20" fill="#E9E9E9"/>
<rect x="281.90" y="498.20" width="1" height="87.20" fill="#E9E9E9"/>
<rect x="322.65" y="498.20" width="1" height="87.20" fill="#E9E9E9"/>
<rect x="363.40" y="498.20" width="1" height="87.20" fill="#E9E9E9"/>
<rect x="119.40" y="563.10" width="263.25" height="1" fill="#E9E9E9"/>
<rect x="119.40" y="541.30" width="263.25" height="1" fill="#E9E9E9"/>
<rect x="119.40" y="519.50" width="263.25" height="1" fill="#E9E9E9"/>
<polyline points="119.40,584.80 119.40,584.80 121.44,584.80 121.44,583.93 123.48,583.93 123.48,583.93 125.51,583.93 125.51,557.09 127.55,557.09 127.55,555.36 129.59,555.36 129.59,583.93 131.62,583.93 131.62,555.36 133.66,555.36 133.66,560.55 135.70,560.55 135.70,544.10 137.74,544.10 137.74,544.10 139.78,544.10 139.78,554.49 141.81,554.49 141.81,558.82 143.85,558.82 143.85,583.93 145.89,583.93 145.89,553.62 147.93,553.62 147.93,544.96 149.96,544.96 149.96,550.16 152.00,550.16 152.00,557.09 154.04,557.09 154.04,583.93 156.08,583.93 156.08,582.20 158.11,582.20 158.11,583.07 160.15,583.07 160.15,583.07 162.19,583.07 162.19,583.07 164.23,583.07 164.23,583.07 166.26,583.07 166.26,583.50 168.30,583.50 168.30,583.93 170.34,583.93 170.34,583.93 172.38,583.93 172.38,583.93 174.41,583.93 174.41,582.63 176.45,582.63 176.45,583.50 178.49,583.50 178.49,582.63 180.53,582.63 180.53,583.50 182.56,583.50 182.56,583.07 184.60,583.07 184.60,582.20 186.64,582.20 186.64,570.08 188.68,570.08 188.68,560.55 190.71,560.55 190.71,583.93 192.75,583.93 192.75,554.49 194.79,554.49 194.79,551.03 196.82,551.03 196.82,557.95 198.86,557.95 198.86,550.16 200.90,550.16 200.90,559.69 202.94,559.69 202.94,556.22 204.98,556.22 204.98,583.93 207.01,583.93 207.01,554.49 209.05,554.49 209.05,552.76 211.09,552.76 211.09,562.28 213.12,562.28 213.12,563.15 215.16,563.15 215.16,564.02 217.20,564.02 217.20,570.08 219.24,570.08 219.24,583.93 221.28,583.93 221.28,582.63 223.31,582.63 223.31,583.93 225.35,583.93 225.35,583.07 227.39,583.07 227.39,583.93 229.43,583.93 229.43,583.93 231.46,583.93 231.46,583.07 233.50,583.07 233.50,583.50 235.54,583.50 235.54,583.93 237.58,583.93 237.58,582.63 239.61,582.63 239.61,583.07 241.65,583.07 241.65,583.93 243.69,583.93 243.69,582.20 245.73,582.20 245.73,583.07 247.76,583.07 247.76,583.50 249.80,583.50 249.80,582.63 251.84,582.63 251.84,582.20 253.88,582.20 253.88,556.22 255.91,556.22 255.91,550.16 257.95,550.16 257.95,560.55 259.99,560.55 259.99,544.96 262.02,544.96 262.02,551.89 264.06,551.89 264.06,556.22 266.10,556.22 266.10,583.93 268.14,583.93 268.14,555.36 270.18,555.36 270.18,557.95 272.21,557.95 272.21,556.22 274.25,556.22 274.25,556.22 276.29,556.22 276.29,552.76 278.33,552.76 278.33,551.03 280.36,551.03 280.36,583.93 282.40,583.93 282.40,560.55 284.44,560.55 284.44,583.93 286.48,583.93 286.48,583.93 288.51,583.93 288.51,582.63 290.55,582.63 290.55,582.20 292.59,582.20 292.59,583.50 294.62,583.50 294.62,583.07 296.66,583.07 296.66,583.50 298.70,583.50 298.70,583.93 300.74,583.93 300.74,583.50 302.77,583.50 302.77,582.20 304.81,582.20 304.81,583.93 306.85,583.93 306.85,583.07 308.89,583.07 308.89,583.07 310.93,583.07 310.93,582.20 312.96,582.20 312.96,583.07 315.00,583.07 315.00,583.50 317.04,583.50 317.04,565.75 319.08,565.75 319.08,559.69 321.11,559.69 321.11,551.03 323.15,551.03 323.15,551.03 325.19,551.03 325.19,567.48 327.23,567.48 327.23,561.42 329.26,561.42 329.26,547.56 331.30,547.56 331.30,557.09 333.34,557.09 333.34,557.95 335.38,557.95 335.38,555.36 337.41,555.36 337.41,544.96 339.45,544.96 339.45,548.43 341.49,548.43 341.49,564.02 343.52,564.02 343.52,518.12 345.56,518.12 345.56,583.93 347.60,583.93 347.60,582.63 349.64,582.63 349.64,583.93 351.68,583.93 351.68,583.07 353.71,583.07 353.71,582.20 355.75,582.20 355.75,582.20 357.79,582.20 357.79,582.20 359.83,582.20 359.83,582.20 361.86,582.20 361.86,583.93 363.90,583.93 363.90,582.20 365.94,582.20 365.94,583.93 367.98,583.93 367.98,582.20 370.01,582.20 370.01,583.07 372.05,583.07 372.05,582.63 374.09,582.63 374.09,582.20 376.12,582.20 376.12,583.93 378.16,583.93 378.16,583.93 380.20,583.93" fill="none" stroke="#4848FF" stroke-width="1.15" stroke-linejoin="round"/>
<rect x="118.90" y="498.20" width="263.75" height="87.20" fill="none" stroke="#808080" stroke-width="1.5"/>
<text x="114.90" y="588.90" font-size="12.2" fill="#545454" font-family="'Liberation Serif', serif" text-anchor="end" textLength="6.60" lengthAdjust="spacingAndGlyphs" >0</text>
<text x="114.90" y="567.35" font-size="12.2" fill="#545454" font-family="'Liberation Serif', serif" text-anchor="end" textLength="13.20" lengthAdjust="spacingAndGlyphs" >25</text>
<text x="114.90" y="545.80" font-size="12.2" fill="#545454" font-family="'Liberation Serif', serif" text-anchor="end" textLength="13.20" lengthAdjust="spacingAndGlyphs" >50</text>
<text x="114.90" y="524.25" font-size="12.2" fill="#545454" font-family="'Liberation Serif', serif" text-anchor="end" textLength="13.20" lengthAdjust="spacingAndGlyphs" >75</text>
<text x="114.90" y="502.70" font-size="12.2" fill="#545454" font-family="'Liberation Serif', serif" text-anchor="end" textLength="19.80" lengthAdjust="spacingAndGlyphs" >100</text>
<text x="119.40" y="599.00" font-size="12.2" fill="#545454" font-family="'Liberation Serif', serif" text-anchor="middle" textLength="6.60" lengthAdjust="spacingAndGlyphs" >0</text>
<text x="160.15" y="599.00" font-size="12.2" fill="#545454" font-family="'Liberation Serif', serif" text-anchor="middle" textLength="13.20" lengthAdjust="spacingAndGlyphs" >20</text>
<text x="200.90" y="599.00" font-size="12.2" fill="#545454" font-family="'Liberation Serif', serif" text-anchor="middle" textLength="13.20" lengthAdjust="spacingAndGlyphs" >40</text>
<text x="241.65" y="599.00" font-size="12.2" fill="#545454" font-family="'Liberation Serif', serif" text-anchor="middle" textLength="13.20" lengthAdjust="spacingAndGlyphs" >60</text>
<text x="282.40" y="599.00" font-size="12.2" fill="#545454" font-family="'Liberation Serif', serif" text-anchor="middle" textLength="13.20" lengthAdjust="spacingAndGlyphs" >80</text>
<text x="323.15" y="599.00" font-size="12.2" fill="#545454" font-family="'Liberation Serif', serif" text-anchor="middle" textLength="19.80" lengthAdjust="spacingAndGlyphs" >100</text>
<text x="363.90" y="599.00" font-size="12.2" fill="#545454" font-family="'Liberation Serif', serif" text-anchor="middle" textLength="19.80" lengthAdjust="spacingAndGlyphs" >120</text>
<rect x="295.70" y="506.50" width="14" height="11" fill="#FFFFFF" stroke="#CCCCCC" stroke-width="1"/>
<rect x="297.20" y="508.00" width="11" height="8" fill="#0000FF"/>
<text x="313.60" y="516.40" font-size="11.9" fill="#8A8A8A" font-family="'Liberation Serif', serif" textLength="61.60" lengthAdjust="spacingAndGlyphs" >aida05 Stat</text>
<path d="M380.20 488.80 L390.40 499.00 L380.20 509.20 L370.00 499.00 Z" fill="#FF0000"/>
<rect x="635.65" y="498.20" width="1" height="87.20" fill="#E9E9E9"/>
<rect x="676.40" y="498.20" width="1" height="87.20" fill="#E9E9E9"/>
<rect x="717.15" y="498.20" width="1" height="87.20" fill="#E9E9E9"/>
<rect x="757.90" y="498.20" width="1" height="87.20" fill="#E9E9E9"/>
<rect x="798.65" y="498.20" width="1" height="87.20" fill="#E9E9E9"/>
<rect x="839.40" y="498.20" width="1" height="87.20" fill="#E9E9E9"/>
<rect x="595.40" y="563.10" width="263.25" height="1" fill="#E9E9E9"/>
<rect x="595.40" y="541.30" width="263.25" height="1" fill="#E9E9E9"/>
<rect x="595.40" y="519.50" width="263.25" height="1" fill="#E9E9E9"/>
<polyline points="595.40,584.80 595.40,584.80 597.44,584.80 597.44,551.89 599.48,551.89 599.48,558.82 601.51,558.82 601.51,538.90 603.55,538.90 603.55,539.77 605.59,539.77 605.59,557.95 607.62,557.95 607.62,557.95 609.66,557.95 609.66,551.89 611.70,551.89 611.70,553.62 613.74,553.62 613.74,554.49 615.77,554.49 615.77,558.82 617.81,558.82 617.81,552.76 619.85,552.76 619.85,552.76 621.89,552.76 621.89,572.68 623.92,572.68 623.92,552.76 625.96,552.76 625.96,565.75 628.00,565.75 628.00,564.02 630.04,564.02 630.04,583.07 632.07,583.07 632.07,583.07 634.11,583.07 634.11,583.07 636.15,583.07 636.15,583.50 638.19,583.50 638.19,582.63 640.23,582.63 640.23,583.93 642.26,583.93 642.26,583.93 644.30,583.93 644.30,582.20 646.34,582.20 646.34,583.50 648.38,583.50 648.38,583.07 650.41,583.07 650.41,583.50 652.45,583.50 652.45,583.93 654.49,583.93 654.49,582.63 656.52,582.63 656.52,583.07 658.56,583.07 658.56,583.50 660.60,583.50 660.60,583.07 662.64,583.07 662.64,560.55 664.67,560.55 664.67,564.02 666.71,564.02 666.71,555.36 668.75,555.36 668.75,554.49 670.79,554.49 670.79,553.62 672.82,553.62 672.82,572.68 674.86,572.68 674.86,561.42 676.90,561.42 676.90,554.49 678.94,554.49 678.94,567.48 680.98,567.48 680.98,558.82 683.01,558.82 683.01,549.29 685.05,549.29 685.05,560.55 687.09,560.55 687.09,551.03 689.12,551.03 689.12,554.49 691.16,554.49 691.16,564.02 693.20,564.02 693.20,577.87 695.24,577.87 695.24,583.07 697.27,583.07 697.27,582.20 699.31,582.20 699.31,582.63 701.35,582.63 701.35,583.50 703.39,583.50 703.39,583.50 705.42,583.50 705.42,583.93 707.46,583.93 707.46,583.93 709.50,583.93 709.50,583.93 711.54,583.93 711.54,583.93 713.58,583.93 713.58,583.07 715.61,583.07 715.61,583.93 717.65,583.93 717.65,583.50 719.69,583.50 719.69,583.93 721.73,583.93 721.73,583.07 723.76,583.07 723.76,583.07 725.80,583.07 725.80,583.07 727.84,583.07 727.84,557.95 729.88,557.95 729.88,572.68 731.91,572.68 731.91,551.89 733.95,551.89 733.95,564.88 735.99,564.88 735.99,553.62 738.02,553.62 738.02,552.76 740.06,552.76 740.06,551.03 742.10,551.03 742.10,555.36 744.14,555.36 744.14,549.29 746.17,549.29 746.17,541.50 748.21,541.50 748.21,558.82 750.25,558.82 750.25,570.08 752.29,570.08 752.29,563.15 754.33,563.15 754.33,561.42 756.36,561.42 756.36,550.16 758.40,550.16 758.40,564.02 760.44,564.02 760.44,583.93 762.48,583.93 762.48,582.20 764.51,582.20 764.51,583.93 766.55,583.93 766.55,583.07 768.59,583.07 768.59,582.63 770.62,582.63 770.62,583.50 772.66,583.50 772.66,582.20 774.70,582.20 774.70,582.63 776.74,582.63 776.74,583.93 778.77,583.93 778.77,582.20 780.81,582.20 780.81,582.63 782.85,582.63 782.85,583.93 784.89,583.93 784.89,583.07 786.92,583.07 786.92,582.20 788.96,582.20 788.96,582.63 791.00,582.63 791.00,582.20 793.04,582.20 793.04,541.50 795.08,541.50 795.08,560.55 797.11,560.55 797.11,564.02 799.15,564.02 799.15,550.16 801.19,550.16 801.19,544.10 803.23,544.10 803.23,569.21 805.26,569.21 805.26,555.36 807.30,555.36 807.30,564.88 809.34,564.88 809.34,551.89 811.38,551.89 811.38,558.82 813.41,558.82 813.41,551.03 815.45,551.03 815.45,553.62 817.49,553.62 817.49,562.28 819.52,562.28 819.52,564.02 821.56,564.02 821.56,498.20 823.60,498.20 823.60,564.02 825.64,564.02 825.64,583.93 827.67,583.93 827.67,583.93 829.71,583.93 829.71,583.07 831.75,583.07 831.75,583.93 833.79,583.93 833.79,583.07 835.83,583.07 835.83,582.20 837.86,582.20 837.86,582.63 839.90,582.63 839.90,583.50 841.94,583.50 841.94,583.93 843.98,583.93 843.98,582.20 846.01,582.20 846.01,582.63 848.05,582.63 848.05,583.07 850.09,583.07 850.09,583.07 852.12,583.07 852.12,583.07 854.16,583.07 854.16,582.63 856.20,582.63" fill="none" stroke="#4848FF" stroke-width="1.15" stroke-linejoin="round"/>
<rect x="594.90" y="498.20" width="263.75" height="87.20" fill="none" stroke="#808080" stroke-width="1.5"/>
<text x="591.90" y="588.90" font-size="12.2" fill="#545454" font-family="'Liberation Serif', serif" text-anchor="end" textLength="6.60" lengthAdjust="spacingAndGlyphs" >0</text>
<text x="591.90" y="567.35" font-size="12.2" fill="#545454" font-family="'Liberation Serif', serif" text-anchor="end" textLength="13.20" lengthAdjust="spacingAndGlyphs" >25</text>
<text x="591.90" y="545.80" font-size="12.2" fill="#545454" font-family="'Liberation Serif', serif" text-anchor="end" textLength="13.20" lengthAdjust="spacingAndGlyphs" >50</text>
<text x="591.90" y="524.25" font-size="12.2" fill="#545454" font-family="'Liberation Serif', serif" text-anchor="end" textLength="13.20" lengthAdjust="spacingAndGlyphs" >75</text>
<text x="591.90" y="502.70" font-size="12.2" fill="#545454" font-family="'Liberation Serif', serif" text-anchor="end" textLength="19.80" lengthAdjust="spacingAndGlyphs" >100</text>
<text x="595.40" y="599.00" font-size="12.2" fill="#545454" font-family="'Liberation Serif', serif" text-anchor="middle" textLength="6.60" lengthAdjust="spacingAndGlyphs" >0</text>
<text x="636.15" y="599.00" font-size="12.2" fill="#545454" font-family="'Liberation Serif', serif" text-anchor="middle" textLength="13.20" lengthAdjust="spacingAndGlyphs" >20</text>
<text x="676.90" y="599.00" font-size="12.2" fill="#545454" font-family="'Liberation Serif', serif" text-anchor="middle" textLength="13.20" lengthAdjust="spacingAndGlyphs" >40</text>
<text x="717.65" y="599.00" font-size="12.2" fill="#545454" font-family="'Liberation Serif', serif" text-anchor="middle" textLength="13.20" lengthAdjust="spacingAndGlyphs" >60</text>
<text x="758.40" y="599.00" font-size="12.2" fill="#545454" font-family="'Liberation Serif', serif" text-anchor="middle" textLength="13.20" lengthAdjust="spacingAndGlyphs" >80</text>
<text x="799.15" y="599.00" font-size="12.2" fill="#545454" font-family="'Liberation Serif', serif" text-anchor="middle" textLength="19.80" lengthAdjust="spacingAndGlyphs" >100</text>
<text x="839.90" y="599.00" font-size="12.2" fill="#545454" font-family="'Liberation Serif', serif" text-anchor="middle" textLength="19.80" lengthAdjust="spacingAndGlyphs" >120</text>
<rect x="772.70" y="506.50" width="14" height="11" fill="#FFFFFF" stroke="#CCCCCC" stroke-width="1"/>
<rect x="774.20" y="508.00" width="11" height="8" fill="#0000FF"/>
<text x="790.60" y="516.40" font-size="11.9" fill="#8A8A8A" font-family="'Liberation Serif', serif" textLength="61.60" lengthAdjust="spacingAndGlyphs" >aida06 Stat</text>
<path d="M856.20 488.80 L866.40 499.00 L856.20 509.20 L846.00 499.00 Z" fill="#FF0000"/>
<rect x="1111.65" y="498.20" width="1" height="87.20" fill="#E9E9E9"/>
<rect x="1152.40" y="498.20" width="1" height="87.20" fill="#E9E9E9"/>
<rect x="1193.15" y="498.20" width="1" height="87.20" fill="#E9E9E9"/>
<rect x="1233.90" y="498.20" width="1" height="87.20" fill="#E9E9E9"/>
<rect x="1274.65" y="498.20" width="1" height="87.20" fill="#E9E9E9"/>
<rect x="1315.40" y="498.20" width="1" height="87.20" fill="#E9E9E9"/>
<rect x="1071.40" y="563.10" width="263.24" height="1" fill="#E9E9E9"/>
<rect x="1071.40" y="541.30" width="263.24" height="1" fill="#E9E9E9"/>
<rect x="1071.40" y="519.50" width="263.24" height="1" fill="#E9E9E9"/>
<polyline points="1071.40,584.80 1071.40,584.80 1073.44,584.80 1073.44,569.21 1075.48,569.21 1075.48,571.81 1077.51,571.81 1077.51,570.94 1079.55,570.94 1079.55,564.88 1081.59,564.88 1081.59,573.54 1083.62,573.54 1083.62,574.41 1085.66,574.41 1085.66,574.41 1087.70,574.41 1087.70,567.48 1089.74,567.48 1089.74,570.94 1091.78,570.94 1091.78,574.41 1093.81,574.41 1093.81,575.27 1095.85,575.27 1095.85,575.27 1097.89,575.27 1097.89,569.21 1099.93,569.21 1099.93,576.14 1101.96,576.14 1101.96,572.68 1104.00,572.68 1104.00,576.14 1106.04,576.14 1106.04,583.93 1108.08,583.93 1108.08,583.93 1110.11,583.93 1110.11,582.63 1112.15,582.63 1112.15,583.93 1114.19,583.93 1114.19,583.93 1116.23,583.93 1116.23,583.93 1118.26,583.93 1118.26,583.93 1120.30,583.93 1120.30,583.93 1122.34,583.93 1122.34,583.07 1124.38,583.07 1124.38,583.07 1126.41,583.07 1126.41,582.20 1128.45,582.20 1128.45,582.63 1130.49,582.63 1130.49,583.93 1132.53,583.93 1132.53,583.07 1134.56,583.07 1134.56,582.20 1136.60,582.20 1136.60,583.07 1138.64,583.07 1138.64,576.14 1140.68,576.14 1140.68,570.08 1142.71,570.08 1142.71,575.27 1144.75,575.27 1144.75,576.14 1146.79,576.14 1146.79,577.01 1148.83,577.01 1148.83,574.41 1150.86,574.41 1150.86,571.81 1152.90,571.81 1152.90,571.81 1154.94,571.81 1154.94,577.01 1156.98,577.01 1156.98,569.21 1159.01,569.21 1159.01,577.01 1161.05,577.01 1161.05,567.48 1163.09,567.48 1163.09,570.08 1165.12,570.08 1165.12,574.41 1167.16,574.41 1167.16,581.34 1169.20,581.34 1169.20,572.68 1171.24,572.68 1171.24,583.93 1173.28,583.93 1173.28,583.07 1175.31,583.07 1175.31,582.63 1177.35,582.63 1177.35,583.50 1179.39,583.50 1179.39,583.93 1181.43,583.93 1181.43,583.07 1183.46,583.07 1183.46,583.07 1185.50,583.07 1185.50,580.47 1187.54,580.47 1187.54,583.93 1189.58,583.93 1189.58,583.93 1191.61,583.93 1191.61,583.93 1193.65,583.93 1193.65,582.20 1195.69,582.20 1195.69,582.63 1197.73,582.63 1197.73,582.63 1199.76,582.63 1199.76,583.93 1201.80,583.93 1201.80,583.07 1203.84,583.07 1203.84,565.75 1205.88,565.75 1205.88,573.54 1207.91,573.54 1207.91,567.48 1209.95,567.48 1209.95,567.48 1211.99,567.48 1211.99,557.95 1214.03,557.95 1214.03,572.68 1216.06,572.68 1216.06,569.21 1218.10,569.21 1218.10,573.54 1220.14,573.54 1220.14,574.41 1222.18,574.41 1222.18,572.68 1224.21,572.68 1224.21,574.41 1226.25,574.41 1226.25,577.01 1228.29,577.01 1228.29,576.14 1230.33,576.14 1230.33,572.68 1232.36,572.68 1232.36,568.35 1234.40,568.35 1234.40,564.02 1236.44,564.02 1236.44,583.93 1238.48,583.93 1238.48,582.63 1240.51,582.63 1240.51,583.93 1242.55,583.93 1242.55,583.07 1244.59,583.07 1244.59,582.20 1246.62,582.20 1246.62,583.93 1248.66,583.93 1248.66,582.20 1250.70,582.20 1250.70,582.20 1252.74,582.20 1252.74,583.93 1254.78,583.93 1254.78,583.93 1256.81,583.93 1256.81,583.50 1258.85,583.50 1258.85,583.93 1260.89,583.93 1260.89,583.50 1262.93,583.50 1262.93,583.07 1264.96,583.07 1264.96,583.93 1267.00,583.93 1267.00,582.20 1269.04,582.20 1269.04,571.81 1271.08,571.81 1271.08,564.02 1273.11,564.02 1273.11,574.41 1275.15,574.41 1275.15,566.61 1277.19,566.61 1277.19,567.48 1279.23,567.48 1279.23,570.94 1281.26,570.94 1281.26,574.41 1283.30,574.41 1283.30,570.08 1285.34,570.08 1285.34,564.02 1287.38,564.02 1287.38,567.48 1289.41,567.48 1289.41,564.02 1291.45,564.02 1291.45,567.48 1293.49,567.48 1293.49,572.68 1295.53,572.68 1295.53,572.68 1297.56,572.68 1297.56,498.20 1299.60,498.20 1299.60,567.48 1301.64,567.48 1301.64,583.93 1303.68,583.93 1303.68,583.07 1305.71,583.07 1305.71,583.50 1307.75,583.50 1307.75,583.50 1309.79,583.50 1309.79,583.07 1311.83,583.07 1311.83,583.07 1313.86,583.07 1313.86,582.20 1315.90,582.20 1315.90,583.93 1317.94,583.93 1317.94,583.93 1319.98,583.93 1319.98,582.63 1322.01,582.63 1322.01,583.50 1324.05,583.50 1324.05,583.07 1326.09,583.07 1326.09,577.87 1328.12,577.87 1328.12,582.63 1330.16,582.63 1330.16,583.07 1332.20,583.07" fill="none" stroke="#4848FF" stroke-width="1.15" stroke-linejoin="round"/>
<rect x="1070.90" y="498.20" width="263.74" height="87.20" fill="none" stroke="#808080" stroke-width="1.5"/>
<text x="1067.90" y="588.90" font-size="12.2" fill="#545454" font-family="'Liberation Serif', serif" text-anchor="end" textLength="6.60" lengthAdjust="spacingAndGlyphs" >0</text>
<text x="1067.90" y="567.35" font-size="12.2" fill="#545454" font-family="'Liberation Serif', serif" text-anchor="end" textLength="13.20" lengthAdjust="spacingAndGlyphs" >25</text>
<text x="1067.90" y="545.80" font-size="12.2" fill="#545454" font-family="'Liberation Serif', serif" text-anchor="end" textLength="13.20" lengthAdjust="spacingAndGlyphs" >50</text>
<text x="1067.90" y="524.25" font-size="12.2" fill="#545454" font-family="'Liberation Serif', serif" text-anchor="end" textLength="13.20" lengthAdjust="spacingAndGlyphs" >75</text>
<text x="1067.90" y="502.70" font-size="12.2" fill="#545454" font-family="'Liberation Serif', serif" text-anchor="end" textLength="19.80" lengthAdjust="spacingAndGlyphs" >100</text>
<text x="1071.40" y="599.00" font-size="12.2" fill="#545454" font-family="'Liberation Serif', serif" text-anchor="middle" textLength="6.60" lengthAdjust="spacingAndGlyphs" >0</text>
<text x="1112.15" y="599.00" font-size="12.2" fill="#545454" font-family="'Liberation Serif', serif" text-anchor="middle" textLength="13.20" lengthAdjust="spacingAndGlyphs" >20</text>
<text x="1152.90" y="599.00" font-size="12.2" fill="#545454" font-family="'Liberation Serif', serif" text-anchor="middle" textLength="13.20" lengthAdjust="spacingAndGlyphs" >40</text>
<text x="1193.65" y="599.00" font-size="12.2" fill="#545454" font-family="'Liberation Serif', serif" text-anchor="middle" textLength="13.20" lengthAdjust="spacingAndGlyphs" >60</text>
<text x="1234.40" y="599.00" font-size="12.2" fill="#545454" font-family="'Liberation Serif', serif" text-anchor="middle" textLength="13.20" lengthAdjust="spacingAndGlyphs" >80</text>
<text x="1275.15" y="599.00" font-size="12.2" fill="#545454" font-family="'Liberation Serif', serif" text-anchor="middle" textLength="19.80" lengthAdjust="spacingAndGlyphs" >100</text>
<text x="1315.90" y="599.00" font-size="12.2" fill="#545454" font-family="'Liberation Serif', serif" text-anchor="middle" textLength="19.80" lengthAdjust="spacingAndGlyphs" >120</text>
<rect x="1248.70" y="506.50" width="14" height="11" fill="#FFFFFF" stroke="#CCCCCC" stroke-width="1"/>
<rect x="1250.20" y="508.00" width="11" height="8" fill="#0000FF"/>
<text x="1266.60" y="516.40" font-size="11.9" fill="#8A8A8A" font-family="'Liberation Serif', serif" textLength="61.60" lengthAdjust="spacingAndGlyphs" >aida07 Stat</text>
<path d="M1332.20 488.80 L1342.40 499.00 L1332.20 509.20 L1322.00 499.00 Z" fill="#FF0000"/>
<rect x="1587.65" y="498.20" width="1" height="87.20" fill="#E9E9E9"/>
<rect x="1628.40" y="498.20" width="1" height="87.20" fill="#E9E9E9"/>
<rect x="1669.15" y="498.20" width="1" height="87.20" fill="#E9E9E9"/>
<rect x="1709.90" y="498.20" width="1" height="87.20" fill="#E9E9E9"/>
<rect x="1750.65" y="498.20" width="1" height="87.20" fill="#E9E9E9"/>
<rect x="1791.40" y="498.20" width="1" height="87.20" fill="#E9E9E9"/>
<rect x="1547.40" y="563.10" width="263.24" height="1" fill="#E9E9E9"/>
<rect x="1547.40" y="541.30" width="263.24" height="1" fill="#E9E9E9"/>
<rect x="1547.40" y="519.50" width="263.24" height="1" fill="#E9E9E9"/>
<polyline points="1547.40,584.80 1547.40,584.80 1549.44,584.80 1549.44,575.27 1551.48,575.27 1551.48,577.01 1553.51,577.01 1553.51,577.01 1555.55,577.01 1555.55,575.27 1557.59,575.27 1557.59,577.01 1559.62,577.01 1559.62,577.87 1561.66,577.87 1561.66,576.14 1563.70,576.14 1563.70,574.41 1565.74,574.41 1565.74,570.08 1567.78,570.08 1567.78,570.08 1569.81,570.08 1569.81,577.87 1571.85,577.87 1571.85,582.20 1573.89,582.20 1573.89,577.01 1575.93,577.01 1575.93,576.14 1577.96,576.14 1577.96,572.68 1580.00,572.68 1580.00,575.27 1582.04,575.27 1582.04,583.93 1584.08,583.93 1584.08,582.20 1586.11,582.20 1586.11,583.07 1588.15,583.07 1588.15,583.07 1590.19,583.07 1590.19,582.20 1592.23,582.20 1592.23,583.07 1594.26,583.07 1594.26,583.93 1596.30,583.93 1596.30,583.07 1598.34,583.07 1598.34,583.93 1600.38,583.93 1600.38,583.07 1602.41,583.07 1602.41,583.07 1604.45,583.07 1604.45,583.93 1606.49,583.93 1606.49,582.20 1608.53,582.20 1608.53,583.07 1610.56,583.07 1610.56,582.20 1612.60,582.20 1612.60,583.93 1614.64,583.93 1614.64,574.41 1616.68,574.41 1616.68,576.14 1618.71,576.14 1618.71,577.01 1620.75,577.01 1620.75,578.74 1622.79,578.74 1622.79,573.54 1624.83,573.54 1624.83,573.54 1626.86,573.54 1626.86,573.54 1628.90,573.54 1628.90,570.94 1630.94,570.94 1630.94,577.01 1632.98,577.01 1632.98,569.21 1635.01,569.21 1635.01,576.14 1637.05,576.14 1637.05,572.68 1639.09,572.68 1639.09,574.41 1641.12,574.41 1641.12,575.27 1643.16,575.27 1643.16,575.27 1645.20,575.27 1645.20,572.68 1647.24,572.68 1647.24,583.93 1649.28,583.93 1649.28,583.07 1651.31,583.07 1651.31,583.93 1653.35,583.93 1653.35,582.20 1655.39,582.20 1655.39,582.20 1657.43,582.20 1657.43,583.93 1659.46,583.93 1659.46,583.93 1661.50,583.93 1661.50,583.93 1663.54,583.93 1663.54,583.07 1665.58,583.07 1665.58,583.07 1667.61,583.07 1667.61,582.63 1669.65,582.63 1669.65,583.93 1671.69,583.93 1671.69,583.07 1673.73,583.07 1673.73,583.93 1675.76,583.93 1675.76,583.50 1677.80,583.50 1677.80,582.63 1679.84,582.63 1679.84,574.41 1681.88,574.41 1681.88,563.15 1683.91,563.15 1683.91,578.74 1685.95,578.74 1685.95,572.68 1687.99,572.68 1687.99,574.41 1690.03,574.41 1690.03,575.27 1692.06,575.27 1692.06,570.94 1694.10,570.94 1694.10,564.02 1696.14,564.02 1696.14,581.34 1698.18,581.34 1698.18,575.27 1700.21,575.27 1700.21,574.41 1702.25,574.41 1702.25,574.41 1704.29,574.41 1704.29,575.27 1706.33,575.27 1706.33,575.27 1708.36,575.27 1708.36,576.14 1710.40,576.14 1710.40,576.14 1712.44,576.14 1712.44,583.93 1714.48,583.93 1714.48,583.07 1716.51,583.07 1716.51,583.07 1718.55,583.07 1718.55,583.07 1720.59,583.07 1720.59,583.07 1722.62,583.07 1722.62,582.20 1724.66,582.20 1724.66,582.20 1726.70,582.20 1726.70,583.93 1728.74,583.93 1728.74,583.07 1730.78,583.07 1730.78,583.93 1732.81,583.93 1732.81,583.93 1734.85,583.93 1734.85,583.93 1736.89,583.93 1736.89,583.50 1738.93,583.50 1738.93,583.93 1740.96,583.93 1740.96,582.20 1743.00,582.20 1743.00,583.93 1745.04,583.93 1745.04,576.14 1747.08,576.14 1747.08,574.41 1749.11,574.41 1749.11,577.87 1751.15,577.87 1751.15,575.27 1753.19,575.27 1753.19,577.87 1755.23,577.87 1755.23,575.27 1757.26,575.27 1757.26,578.74 1759.30,578.74 1759.30,577.01 1761.34,577.01 1761.34,576.14 1763.38,576.14 1763.38,577.87 1765.41,577.87 1765.41,575.27 1767.45,575.27 1767.45,570.94 1769.49,570.94 1769.49,570.08 1771.53,570.08 1771.53,570.08 1773.56,570.08 1773.56,498.20 1775.60,498.20 1775.60,575.27 1777.64,575.27 1777.64,583.93 1779.68,583.93 1779.68,583.07 1781.71,583.07 1781.71,583.07 1783.75,583.07 1783.75,583.07 1785.79,583.07 1785.79,583.93 1787.83,583.93 1787.83,582.20 1789.86,582.20 1789.86,583.93 1791.90,583.93 1791.90,583.07 1793.94,583.07 1793.94,583.50 1795.98,583.50 1795.98,583.07 1798.01,583.07 1798.01,583.07 1800.05,583.07 1800.05,583.07 1802.09,583.07 1802.09,583.07 1804.12,583.07 1804.12,583.93 1806.16,583.93 1806.16,582.63 1808.20,582.63" fill="none" stroke="#4848FF" stroke-width="1.15" stroke-linejoin="round"/>
<rect x="1546.90" y="498.20" width="263.74" height="87.20" fill="none" stroke="#808080" stroke-width="1.5"/>
<text x="1543.90" y="588.90" font-size="12.2" fill="#545454" font-family="'Liberation Serif', serif" text-anchor="end" textLength="6.60" lengthAdjust="spacingAndGlyphs" >0</text>
<text x="1543.90" y="567.35" font-size="12.2" fill="#545454" font-family="'Liberation Serif', serif" text-anchor="end" textLength="13.20" lengthAdjust="spacingAndGlyphs" >25</text>
<text x="1543.90" y="545.80" font-size="12.2" fill="#545454" font-family="'Liberation Serif', serif" text-anchor="end" textLength="13.20" lengthAdjust="spacingAndGlyphs" >50</text>
<text x="1543.90" y="524.25" font-size="12.2" fill="#545454" font-family="'Liberation Serif', serif" text-anchor="end" textLength="13.20" lengthAdjust="spacingAndGlyphs" >75</text>
<text x="1543.90" y="502.70" font-size="12.2" fill="#545454" font-family="'Liberation Serif', serif" text-anchor="end" textLength="19.80" lengthAdjust="spacingAndGlyphs" >100</text>
<text x="1547.40" y="599.00" font-size="12.2" fill="#545454" font-family="'Liberation Serif', serif" text-anchor="middle" textLength="6.60" lengthAdjust="spacingAndGlyphs" >0</text>
<text x="1588.15" y="599.00" font-size="12.2" fill="#545454" font-family="'Liberation Serif', serif" text-anchor="middle" textLength="13.20" lengthAdjust="spacingAndGlyphs" >20</text>
<text x="1628.90" y="599.00" font-size="12.2" fill="#545454" font-family="'Liberation Serif', serif" text-anchor="middle" textLength="13.20" lengthAdjust="spacingAndGlyphs" >40</text>
<text x="1669.65" y="599.00" font-size="12.2" fill="#545454" font-family="'Liberation Serif', serif" text-anchor="middle" textLength="13.20" lengthAdjust="spacingAndGlyphs" >60</text>
<text x="1710.40" y="599.00" font-size="12.2" fill="#545454" font-family="'Liberation Serif', serif" text-anchor="middle" textLength="13.20" lengthAdjust="spacingAndGlyphs" >80</text>
<text x="1751.15" y="599.00" font-size="12.2" fill="#545454" font-family="'Liberation Serif', serif" text-anchor="middle" textLength="19.80" lengthAdjust="spacingAndGlyphs" >100</text>
<text x="1791.90" y="599.00" font-size="12.2" fill="#545454" font-family="'Liberation Serif', serif" text-anchor="middle" textLength="19.80" lengthAdjust="spacingAndGlyphs" >120</text>
<rect x="1724.70" y="506.50" width="14" height="11" fill="#FFFFFF" stroke="#CCCCCC" stroke-width="1"/>
<rect x="1726.20" y="508.00" width="11" height="8" fill="#0000FF"/>
<text x="1742.60" y="516.40" font-size="11.9" fill="#8A8A8A" font-family="'Liberation Serif', serif" textLength="61.60" lengthAdjust="spacingAndGlyphs" >aida08 Stat</text>
<path d="M1808.20 488.80 L1818.40 499.00 L1808.20 509.20 L1798.00 499.00 Z" fill="#FF0000"/>
<rect x="159.65" y="620.20" width="1" height="87.20" fill="#E9E9E9"/>
<rect x="200.40" y="620.20" width="1" height="87.20" fill="#E9E9E9"/>
<rect x="241.15" y="620.20" width="1" height="87.20" fill="#E9E9E9"/>
<rect x="281.90" y="620.20" width="1" height="87.20" fill="#E9E9E9"/>
<rect x="322.65" y="620.20" width="1" height="87.20" fill="#E9E9E9"/>
<rect x="363.40" y="620.20" width="1" height="87.20" fill="#E9E9E9"/>
<rect x="119.40" y="685.10" width="263.25" height="1" fill="#E9E9E9"/>
<rect x="119.40" y="663.30" width="263.25" height="1" fill="#E9E9E9"/>
<rect x="119.40" y="641.50" width="263.25" height="1" fill="#E9E9E9"/>
<polyline points="119.40,706.80 119.40,705.93 121.44,705.93 121.44,693.81 123.48,693.81 123.48,680.82 125.51,680.82 125.51,698.14 127.55,698.14 127.55,693.81 129.59,693.81 129.59,694.68 131.62,694.68 131.62,698.14 133.66,698.14 133.66,692.08 135.70,692.08 135.70,693.81 137.74,693.81 137.74,691.21 139.78,691.21 139.78,694.68 141.81,694.68 141.81,694.68 143.85,694.68 143.85,688.61 145.89,688.61 145.89,683.42 147.93,683.42 147.93,689.48 149.96,689.48 149.96,694.68 152.00,694.68 152.00,691.21 154.04,691.21 154.04,705.07 156.08,705.07 156.08,705.50 158.11,705.50 158.11,705.07 160.15,705.07 160.15,705.07 162.19,705.07 162.19,705.07 164.23,705.07 164.23,704.20 166.26,704.20 166.26,705.07 168.30,705.07 168.30,705.07 170.34,705.07 170.34,705.93 172.38,705.93 172.38,704.63 174.41,704.63 174.41,705.07 176.45,705.07 176.45,705.50 178.49,705.50 178.49,705.07 180.53,705.07 180.53,705.93 182.56,705.93 182.56,704.20 184.60,704.20 184.60,705.07 186.64,705.07 186.64,692.08 188.68,692.08 188.68,697.27 190.71,697.27 190.71,690.35 192.75,690.35 192.75,692.08 194.79,692.08 194.79,696.41 196.82,696.41 196.82,694.68 198.86,694.68 198.86,691.21 200.90,691.21 200.90,689.48 202.94,689.48 202.94,689.48 204.98,689.48 204.98,692.08 207.01,692.08 207.01,700.74 209.05,700.74 209.05,690.35 211.09,690.35 211.09,690.35 213.12,690.35 213.12,691.21 215.16,691.21 215.16,692.08 217.20,692.08 217.20,692.94 219.24,692.94 219.24,705.07 221.28,705.07 221.28,705.93 223.31,705.93 223.31,705.07 225.35,705.07 225.35,705.93 227.39,705.93 227.39,705.07 229.43,705.07 229.43,705.07 231.46,705.07 231.46,705.50 233.50,705.50 233.50,705.93 235.54,705.93 235.54,704.63 237.58,704.63 237.58,705.93 239.61,705.93 239.61,705.07 241.65,705.07 241.65,705.93 243.69,705.93 243.69,705.93 245.73,705.93 245.73,704.63 247.76,704.63 247.76,705.50 249.80,705.50 249.80,704.20 251.84,704.20 251.84,694.68 253.88,694.68 253.88,695.54 255.91,695.54 255.91,691.21 257.95,691.21 257.95,697.27 259.99,697.27 259.99,698.14 262.02,698.14 262.02,698.14 264.06,698.14 264.06,698.14 266.10,698.14 266.10,697.27 268.14,697.27 268.14,698.14 270.18,698.14 270.18,698.14 272.21,698.14 272.21,696.41 274.25,696.41 274.25,687.75 276.29,687.75 276.29,693.81 278.33,693.81 278.33,696.41 280.36,696.41 280.36,699.01 282.40,699.01 282.40,696.41 284.44,696.41 284.44,705.07 286.48,705.07 286.48,705.93 288.51,705.93 288.51,704.20 290.55,704.20 290.55,705.93 292.59,705.93 292.59,704.63 294.62,704.63 294.62,704.63 296.66,704.63 296.66,704.63 298.70,704.63 298.70,705.50 300.74,705.50 300.74,705.93 302.77,705.93 302.77,705.50 304.81,705.50 304.81,705.93 306.85,705.93 306.85,705.07 308.89,705.07 308.89,705.93 310.93,705.93 310.93,704.63 312.96,704.63 312.96,705.93 315.00,705.93 315.00,705.07 317.04,705.07 317.04,694.68 319.08,694.68 319.08,686.02 321.11,686.02 321.11,692.94 323.15,692.94 323.15,692.94 325.19,692.94 325.19,693.81 327.23,693.81 327.23,690.35 329.26,690.35 329.26,693.81 331.30,693.81 331.30,689.48 333.34,689.48 333.34,691.21 335.38,691.21 335.38,695.54 337.41,695.54 337.41,692.94 339.45,692.94 339.45,692.08 341.49,692.08 341.49,693.81 343.52,693.81 343.52,699.01 345.56,699.01 345.56,699.01 347.60,699.01 347.60,696.41 349.64,696.41 349.64,705.07 351.68,705.07 351.68,705.07 353.71,705.07 353.71,705.93 355.75,705.93 355.75,704.63 357.79,704.63 357.79,704.20 359.83,704.20 359.83,705.93 361.86,705.93 361.86,705.93 363.90,705.93 363.90,704.63 365.94,704.63 365.94,705.07 367.98,705.07 367.98,705.07 370.01,705.07 370.01,705.07 372.05,705.07 372.05,705.50 374.09,705.50 374.09,705.07 376.12,705.07 376.12,705.93 378.16,705.93 378.16,705.50 380.20,705.50" fill="none" stroke="#4848FF" stroke-width="1.15" stroke-linejoin="round"/>
<rect x="118.90" y="620.20" width="263.75" height="87.20" fill="none" stroke="#808080" stroke-width="1.5"/>
<text x="114.90" y="710.90" font-size="12.2" fill="#545454" font-family="'Liberation Serif', serif" text-anchor="end" textLength="6.60" lengthAdjust="spacingAndGlyphs" >0</text>
<text x="114.90" y="689.35" font-size="12.2" fill="#545454" font-family="'Liberation Serif', serif" text-anchor="end" textLength="13.20" lengthAdjust="spacingAndGlyphs" >25</text>
<text x="114.90" y="667.80" font-size="12.2" fill="#545454" font-family="'Liberation Serif', serif" text-anchor="end" textLength="13.20" lengthAdjust="spacingAndGlyphs" >50</text>
<text x="114.90" y="646.25" font-size="12.2" fill="#545454" font-family="'Liberation Serif', serif" text-anchor="end" textLength="13.20" lengthAdjust="spacingAndGlyphs" >75</text>
<text x="114.90" y="624.70" font-size="12.2" fill="#545454" font-family="'Liberation Serif', serif" text-anchor="end" textLength="19.80" lengthAdjust="spacingAndGlyphs" >100</text>
<text x="119.40" y="721.00" font-size="12.2" fill="#545454" font-family="'Liberation Serif', serif" text-anchor="middle" textLength="6.60" lengthAdjust="spacingAndGlyphs" >0</text>
<text x="160.15" y="721.00" font-size="12.2" fill="#545454" font-family="'Liberation Serif', serif" text-anchor="middle" textLength="13.20" lengthAdjust="spacingAndGlyphs" >20</text>
<text x="200.90" y="721.00" font-size="12.2" fill="#545454" font-family="'Liberation Serif', serif" text-anchor="middle" textLength="13.20" lengthAdjust="spacingAndGlyphs" >40</text>
<text x="241.65" y="721.00" font-size="12.2" fill="#545454" font-family="'Liberation Serif', serif" text-anchor="middle" textLength="13.20" lengthAdjust="spacingAndGlyphs" >60</text>
<text x="282.40" y="721.00" font-size="12.2" fill="#545454" font-family="'Liberation Serif', serif" text-anchor="middle" textLength="13.20" lengthAdjust="spacingAndGlyphs" >80</text>
<text x="323.15" y="721.00" font-size="12.2" fill="#545454" font-family="'Liberation Serif', serif" text-anchor="middle" textLength="19.80" lengthAdjust="spacingAndGlyphs" >100</text>
<text x="363.90" y="721.00" font-size="12.2" fill="#545454" font-family="'Liberation Serif', serif" text-anchor="middle" textLength="19.80" lengthAdjust="spacingAndGlyphs" >120</text>
<rect x="295.70" y="628.50" width="14" height="11" fill="#FFFFFF" stroke="#CCCCCC" stroke-width="1"/>
<rect x="297.20" y="630.00" width="11" height="8" fill="#0000FF"/>
<text x="313.60" y="638.40" font-size="11.9" fill="#8A8A8A" font-family="'Liberation Serif', serif" textLength="61.60" lengthAdjust="spacingAndGlyphs" >aida09 Stat</text>
<path d="M380.20 610.80 L390.40 621.00 L380.20 631.20 L370.00 621.00 Z" fill="#FF0000"/>
<rect x="635.65" y="620.20" width="1" height="87.20" fill="#E9E9E9"/>
<rect x="676.40" y="620.20" width="1" height="87.20" fill="#E9E9E9"/>
<rect x="717.15" y="620.20" width="1" height="87.20" fill="#E9E9E9"/>
<rect x="757.90" y="620.20" width="1" height="87.20" fill="#E9E9E9"/>
<rect x="798.65" y="620.20" width="1" height="87.20" fill="#E9E9E9"/>
<rect x="839.40" y="620.20" width="1" height="87.20" fill="#E9E9E9"/>
<rect x="595.40" y="685.10" width="263.25" height="1" fill="#E9E9E9"/>
<rect x="595.40" y="663.30" width="263.25" height="1" fill="#E9E9E9"/>
<rect x="595.40" y="641.50" width="263.25" height="1" fill="#E9E9E9"/>
<polyline points="595.40,706.80 595.40,706.80 597.44,706.80 597.44,696.41 599.48,696.41 599.48,696.41 601.51,696.41 601.51,698.14 603.55,698.14 603.55,687.75 605.59,687.75 605.59,697.27 607.62,697.27 607.62,688.61 609.66,688.61 609.66,696.41 611.70,696.41 611.70,701.60 613.74,701.60 613.74,686.02 615.77,686.02 615.77,692.94 617.81,692.94 617.81,691.21 619.85,691.21 619.85,692.94 621.89,692.94 621.89,693.81 623.92,693.81 623.92,690.35 625.96,690.35 625.96,692.94 628.00,692.94 628.00,688.61 630.04,688.61 630.04,705.07 632.07,705.07 632.07,705.50 634.11,705.50 634.11,705.93 636.15,705.93 636.15,704.63 638.19,704.63 638.19,705.50 640.23,705.50 640.23,705.93 642.26,705.93 642.26,705.50 644.30,705.50 644.30,705.07 646.34,705.07 646.34,705.07 648.38,705.07 648.38,705.07 650.41,705.07 650.41,704.63 652.45,704.63 652.45,705.93 654.49,705.93 654.49,705.07 656.52,705.07 656.52,705.50 658.56,705.50 658.56,705.07 660.60,705.07 660.60,705.07 662.64,705.07 662.64,693.81 664.67,693.81 664.67,692.08 666.71,692.08 666.71,699.01 668.75,699.01 668.75,696.41 670.79,696.41 670.79,693.81 672.82,693.81 672.82,692.94 674.86,692.94 674.86,692.94 676.90,692.94 676.90,689.48 678.94,689.48 678.94,688.61 680.98,688.61 680.98,694.68 683.01,694.68 683.01,684.28 685.05,684.28 685.05,682.55 687.09,682.55 687.09,692.08 689.12,692.08 689.12,692.94 691.16,692.94 691.16,692.94 693.20,692.94 693.20,689.48 695.24,689.48 695.24,705.93 697.27,705.93 697.27,705.50 699.31,705.50 699.31,705.07 701.35,705.07 701.35,705.93 703.39,705.93 703.39,705.93 705.42,705.93 705.42,704.20 707.46,704.20 707.46,705.93 709.50,705.93 709.50,705.93 711.54,705.93 711.54,705.93 713.58,705.93 713.58,705.50 715.61,705.50 715.61,705.50 717.65,705.50 717.65,705.93 719.69,705.93 719.69,704.20 721.73,704.20 721.73,705.93 723.76,705.93 723.76,705.50 725.80,705.50 725.80,704.20 727.84,704.20 727.84,693.81 729.88,693.81 729.88,698.14 731.91,698.14 731.91,694.68 733.95,694.68 733.95,687.75 735.99,687.75 735.99,690.35 738.02,690.35 738.02,691.21 740.06,691.21 740.06,692.94 742.10,692.94 742.10,692.08 744.14,692.08 744.14,690.35 746.17,690.35 746.17,689.48 748.21,689.48 748.21,698.14 750.25,698.14 750.25,695.54 752.29,695.54 752.29,694.68 754.33,694.68 754.33,694.68 756.36,694.68 756.36,694.68 758.40,694.68 758.40,694.68 760.44,694.68 760.44,705.93 762.48,705.93 762.48,705.93 764.51,705.93 764.51,704.20 766.55,704.20 766.55,705.07 768.59,705.07 768.59,704.20 770.62,704.20 770.62,704.63 772.66,704.63 772.66,704.20 774.70,704.20 774.70,705.50 776.74,705.50 776.74,705.07 778.77,705.07 778.77,705.93 780.81,705.93 780.81,705.07 782.85,705.07 782.85,705.07 784.89,705.07 784.89,705.07 786.92,705.07 786.92,705.07 788.96,705.07 788.96,704.63 791.00,704.63 791.00,705.50 793.04,705.50 793.04,698.14 795.08,698.14 795.08,691.21 797.11,691.21 797.11,694.68 799.15,694.68 799.15,692.94 801.19,692.94 801.19,691.21 803.23,691.21 803.23,687.75 805.26,687.75 805.26,693.81 807.30,693.81 807.30,696.41 809.34,696.41 809.34,692.94 811.38,692.94 811.38,689.48 813.41,689.48 813.41,686.02 815.45,686.02 815.45,689.48 817.49,689.48 817.49,690.35 819.52,690.35 819.52,697.27 821.56,697.27 821.56,697.27 823.60,697.27 823.60,698.14 825.64,698.14 825.64,705.07 827.67,705.07 827.67,705.93 829.71,705.93 829.71,705.50 831.75,705.50 831.75,705.93 833.79,705.93 833.79,704.20 835.83,704.20 835.83,704.63 837.86,704.63 837.86,705.93 839.90,705.93 839.90,705.07 841.94,705.07 841.94,705.93 843.98,705.93 843.98,705.50 846.01,705.50 846.01,705.93 848.05,705.93 848.05,704.63 850.09,704.63 850.09,705.93 852.12,705.93 852.12,704.20 854.16,704.20 854.16,705.50 856.20,705.50" fill="none" stroke="#4848FF" stroke-width="1.15" stroke-linejoin="round"/>
<rect x="594.90" y="620.20" width="263.75" height="87.20" fill="none" stroke="#808080" stroke-width="1.5"/>
<text x="591.90" y="710.90" font-size="12.2" fill="#545454" font-family="'Liberation Serif', serif" text-anchor="end" textLength="6.60" lengthAdjust="spacingAndGlyphs" >0</text>
<text x="591.90" y="689.35" font-size="12.2" fill="#545454" font-family="'Liberation Serif', serif" text-anchor="end" textLength="13.20" lengthAdjust="spacingAndGlyphs" >25</text>
<text x="591.90" y="667.80" font-size="12.2" fill="#545454" font-family="'Liberation Serif', serif" text-anchor="end" textLength="13.20" lengthAdjust="spacingAndGlyphs" >50</text>
<text x="591.90" y="646.25" font-size="12.2" fill="#545454" font-family="'Liberation Serif', serif" text-anchor="end" textLength="13.20" lengthAdjust="spacingAndGlyphs" >75</text>
<text x="591.90" y="624.70" font-size="12.2" fill="#545454" font-family="'Liberation Serif', serif" text-anchor="end" textLength="19.80" lengthAdjust="spacingAndGlyphs" >100</text>
<text x="595.40" y="721.00" font-size="12.2" fill="#545454" font-family="'Liberation Serif', serif" text-anchor="middle" textLength="6.60" lengthAdjust="spacingAndGlyphs" >0</text>
<text x="636.15" y="721.00" font-size="12.2" fill="#545454" font-family="'Liberation Serif', serif" text-anchor="middle" textLength="13.20" lengthAdjust="spacingAndGlyphs" >20</text>
<text x="676.90" y="721.00" font-size="12.2" fill="#545454" font-family="'Liberation Serif', serif" text-anchor="middle" textLength="13.20" lengthAdjust="spacingAndGlyphs" >40</text>
<text x="717.65" y="721.00" font-size="12.2" fill="#545454" font-family="'Liberation Serif', serif" text-anchor="middle" textLength="13.20" lengthAdjust="spacingAndGlyphs" >60</text>
<text x="758.40" y="721.00" font-size="12.2" fill="#545454" font-family="'Liberation Serif', serif" text-anchor="middle" textLength="13.20" lengthAdjust="spacingAndGlyphs" >80</text>
<text x="799.15" y="721.00" font-size="12.2" fill="#545454" font-family="'Liberation Serif', serif" text-anchor="middle" textLength="19.80" lengthAdjust="spacingAndGlyphs" >100</text>
<text x="839.90" y="721.00" font-size="12.2" fill="#545454" font-family="'Liberation Serif', serif" text-anchor="middle" textLength="19.80" lengthAdjust="spacingAndGlyphs" >120</text>
<rect x="772.70" y="628.50" width="14" height="11" fill="#FFFFFF" stroke="#CCCCCC" stroke-width="1"/>
<rect x="774.20" y="630.00" width="11" height="8" fill="#0000FF"/>
<text x="790.60" y="638.40" font-size="11.9" fill="#8A8A8A" font-family="'Liberation Serif', serif" textLength="61.60" lengthAdjust="spacingAndGlyphs" >aida10 Stat</text>
<path d="M856.20 610.80 L866.40 621.00 L856.20 631.20 L846.00 621.00 Z" fill="#FF0000"/>
<rect x="1111.65" y="620.20" width="1" height="87.20" fill="#E9E9E9"/>
<rect x="1152.40" y="620.20" width="1" height="87.20" fill="#E9E9E9"/>
<rect x="1193.15" y="620.20" width="1" height="87.20" fill="#E9E9E9"/>
<rect x="1233.90" y="620.20" width="1" height="87.20" fill="#E9E9E9"/>
<rect x="1274.65" y="620.20" width="1" height="87.20" fill="#E9E9E9"/>
<rect x="1315.40" y="620.20" width="1" height="87.20" fill="#E9E9E9"/>
<rect x="1071.40" y="685.10" width="263.24" height="1" fill="#E9E9E9"/>
<rect x="1071.40" y="663.30" width="263.24" height="1" fill="#E9E9E9"/>
<rect x="1071.40" y="641.50" width="263.24" height="1" fill="#E9E9E9"/>
<polyline points="1071.40,706.80 1071.40,706.80 1073.44,706.80 1073.44,676.49 1075.48,676.49 1075.48,670.43 1077.51,670.43 1077.51,672.16 1079.55,672.16 1079.55,657.44 1081.59,657.44 1081.59,669.56 1083.62,669.56 1083.62,673.03 1085.66,673.03 1085.66,669.56 1087.70,669.56 1087.70,677.36 1089.74,677.36 1089.74,674.76 1091.78,674.76 1091.78,673.89 1093.81,673.89 1093.81,665.23 1095.85,665.23 1095.85,674.76 1097.89,674.76 1097.89,674.76 1099.93,674.76 1099.93,671.29 1101.96,671.29 1101.96,679.95 1104.00,679.95 1104.00,680.82 1106.04,680.82 1106.04,705.07 1108.08,705.07 1108.08,705.93 1110.11,705.93 1110.11,705.07 1112.15,705.07 1112.15,704.20 1114.19,704.20 1114.19,705.93 1116.23,705.93 1116.23,705.93 1118.26,705.93 1118.26,705.50 1120.30,705.50 1120.30,704.20 1122.34,704.20 1122.34,705.93 1124.38,705.93 1124.38,705.07 1126.41,705.07 1126.41,705.93 1128.45,705.93 1128.45,705.50 1130.49,705.50 1130.49,705.07 1132.53,705.07 1132.53,705.07 1134.56,705.07 1134.56,705.50 1136.60,705.50 1136.60,705.07 1138.64,705.07 1138.64,668.70 1140.68,668.70 1140.68,672.16 1142.71,672.16 1142.71,674.76 1144.75,674.76 1144.75,676.49 1146.79,676.49 1146.79,670.43 1148.83,670.43 1148.83,679.09 1150.86,679.09 1150.86,669.56 1152.90,669.56 1152.90,670.43 1154.94,670.43 1154.94,670.43 1156.98,670.43 1156.98,669.56 1159.01,669.56 1159.01,667.83 1161.05,667.83 1161.05,670.43 1163.09,670.43 1163.09,673.89 1165.12,673.89 1165.12,671.29 1167.16,671.29 1167.16,673.89 1169.20,673.89 1169.20,673.89 1171.24,673.89 1171.24,705.93 1173.28,705.93 1173.28,705.93 1175.31,705.93 1175.31,705.93 1177.35,705.93 1177.35,705.07 1179.39,705.07 1179.39,704.63 1181.43,704.63 1181.43,705.93 1183.46,705.93 1183.46,705.93 1185.50,705.93 1185.50,705.93 1187.54,705.93 1187.54,705.50 1189.58,705.50 1189.58,705.93 1191.61,705.93 1191.61,705.93 1193.65,705.93 1193.65,705.93 1195.69,705.93 1195.69,705.50 1197.73,705.50 1197.73,704.63 1199.76,704.63 1199.76,705.50 1201.80,705.50 1201.80,705.07 1203.84,705.07 1203.84,666.96 1205.88,666.96 1205.88,668.70 1207.91,668.70 1207.91,666.10 1209.95,666.10 1209.95,664.37 1211.99,664.37 1211.99,667.83 1214.03,667.83 1214.03,668.70 1216.06,668.70 1216.06,666.96 1218.10,666.96 1218.10,677.36 1220.14,677.36 1220.14,679.95 1222.18,679.95 1222.18,677.36 1224.21,677.36 1224.21,673.89 1226.25,673.89 1226.25,664.37 1228.29,664.37 1228.29,673.89 1230.33,673.89 1230.33,675.62 1232.36,675.62 1232.36,675.62 1234.40,675.62 1234.40,675.62 1236.44,675.62 1236.44,705.07 1238.48,705.07 1238.48,704.20 1240.51,704.20 1240.51,705.93 1242.55,705.93 1242.55,705.50 1244.59,705.50 1244.59,705.07 1246.62,705.07 1246.62,705.07 1248.66,705.07 1248.66,704.63 1250.70,704.63 1250.70,705.93 1252.74,705.93 1252.74,705.50 1254.78,705.50 1254.78,705.50 1256.81,705.50 1256.81,704.20 1258.85,704.20 1258.85,705.93 1260.89,705.93 1260.89,705.50 1262.93,705.50 1262.93,705.93 1264.96,705.93 1264.96,705.93 1267.00,705.93 1267.00,705.93 1269.04,705.93 1269.04,676.49 1271.08,676.49 1271.08,665.23 1273.11,665.23 1273.11,673.89 1275.15,673.89 1275.15,686.02 1277.19,686.02 1277.19,672.16 1279.23,672.16 1279.23,679.09 1281.26,679.09 1281.26,677.36 1283.30,677.36 1283.30,672.16 1285.34,672.16 1285.34,680.82 1287.38,680.82 1287.38,677.36 1289.41,677.36 1289.41,676.49 1291.45,676.49 1291.45,667.83 1293.49,667.83 1293.49,678.22 1295.53,678.22 1295.53,674.76 1297.56,674.76 1297.56,673.89 1299.60,673.89 1299.60,673.89 1301.64,673.89 1301.64,705.07 1303.68,705.07 1303.68,704.63 1305.71,704.63 1305.71,705.07 1307.75,705.07 1307.75,705.07 1309.79,705.07 1309.79,705.93 1311.83,705.93 1311.83,705.07 1313.86,705.07 1313.86,705.07 1315.90,705.07 1315.90,705.93 1317.94,705.93 1317.94,705.07 1319.98,705.07 1319.98,705.93 1322.01,705.93 1322.01,704.63 1324.05,704.63 1324.05,704.20 1326.09,704.20 1326.09,704.63 1328.12,704.63 1328.12,705.07 1330.16,705.07 1330.16,704.63 1332.20,704.63" fill="none" stroke="#4848FF" stroke-width="1.15" stroke-linejoin="round"/>
<rect x="1070.90" y="620.20" width="263.74" height="87.20" fill="none" stroke="#808080" stroke-width="1.5"/>
<text x="1067.90" y="710.90" font-size="12.2" fill="#545454" font-family="'Liberation Serif', serif" text-anchor="end" textLength="6.60" lengthAdjust="spacingAndGlyphs" >0</text>
<text x="1067.90" y="689.35" font-size="12.2" fill="#545454" font-family="'Liberation Serif', serif" text-anchor="end" textLength="13.20" lengthAdjust="spacingAndGlyphs" >25</text>
<text x="1067.90" y="667.80" font-size="12.2" fill="#545454" font-family="'Liberation Serif', serif" text-anchor="end" textLength="13.20" lengthAdjust="spacingAndGlyphs" >50</text>
<text x="1067.90" y="646.25" font-size="12.2" fill="#545454" font-family="'Liberation Serif', serif" text-anchor="end" textLength="13.20" lengthAdjust="spacingAndGlyphs" >75</text>
<text x="1067.90" y="624.70" font-size="12.2" fill="#545454" font-family="'Liberation Serif', serif" text-anchor="end" textLength="19.80" lengthAdjust="spacingAndGlyphs" >100</text>
<text x="1071.40" y="721.00" font-size="12.2" fill="#545454" font-family="'Liberation Serif', serif" text-anchor="middle" textLength="6.60" lengthAdjust="spacingAndGlyphs" >0</text>
<text x="1112.15" y="721.00" font-size="12.2" fill="#545454" font-family="'Liberation Serif', serif" text-anchor="middle" textLength="13.20" lengthAdjust="spacingAndGlyphs" >20</text>
<text x="1152.90" y="721.00" font-size="12.2" fill="#545454" font-family="'Liberation Serif', serif" text-anchor="middle" textLength="13.20" lengthAdjust="spacingAndGlyphs" >40</text>
<text x="1193.65" y="721.00" font-size="12.2" fill="#545454" font-family="'Liberation Serif', serif" text-anchor="middle" textLength="13.20" lengthAdjust="spacingAndGlyphs" >60</text>
<text x="1234.40" y="721.00" font-size="12.2" fill="#545454" font-family="'Liberation Serif', serif" text-anchor="middle" textLength="13.20" lengthAdjust="spacingAndGlyphs" >80</text>
<text x="1275.15" y="721.00" font-size="12.2" fill="#545454" font-family="'Liberation Serif', serif" text-anchor="middle" textLength="19.80" lengthAdjust="spacingAndGlyphs" >100</text>
<text x="1315.90" y="721.00" font-size="12.2" fill="#545454" font-family="'Liberation Serif', serif" text-anchor="middle" textLength="19.80" lengthAdjust="spacingAndGlyphs" >120</text>
<rect x="1248.70" y="628.50" width="14" height="11" fill="#FFFFFF" stroke="#CCCCCC" stroke-width="1"/>
<rect x="1250.20" y="630.00" width="11" height="8" fill="#0000FF"/>
<text x="1266.60" y="638.40" font-size="11.9" fill="#8A8A8A" font-family="'Liberation Serif', serif" textLength="61.60" lengthAdjust="spacingAndGlyphs" >aida11 Stat</text>
<path d="M1332.20 610.80 L1342.40 621.00 L1332.20 631.20 L1322.00 621.00 Z" fill="#FF0000"/>
<rect x="1587.65" y="620.20" width="1" height="87.20" fill="#E9E9E9"/>
<rect x="1628.40" y="620.20" width="1" height="87.20" fill="#E9E9E9"/>
<rect x="1669.15" y="620.20" width="1" height="87.20" fill="#E9E9E9"/>
<rect x="1709.90" y="620.20" width="1" height="87.20" fill="#E9E9E9"/>
<rect x="1750.65" y="620.20" width="1" height="87.20" fill="#E9E9E9"/>
<rect x="1791.40" y="620.20" width="1" height="87.20" fill="#E9E9E9"/>
<rect x="1547.40" y="685.10" width="263.24" height="1" fill="#E9E9E9"/>
<rect x="1547.40" y="663.30" width="263.24" height="1" fill="#E9E9E9"/>
<rect x="1547.40" y="641.50" width="263.24" height="1" fill="#E9E9E9"/>
<polyline points="1547.40,706.80 1547.40,706.80 1549.44,706.80 1549.44,671.29 1551.48,671.29 1551.48,670.43 1553.51,670.43 1553.51,674.76 1555.55,674.76 1555.55,675.62 1557.59,675.62 1557.59,679.09 1559.62,679.09 1559.62,669.56 1561.66,669.56 1561.66,659.17 1563.70,659.17 1563.70,664.37 1565.74,664.37 1565.74,666.96 1567.78,666.96 1567.78,664.37 1569.81,664.37 1569.81,679.95 1571.85,679.95 1571.85,685.15 1573.89,685.15 1573.89,675.62 1575.93,675.62 1575.93,671.29 1577.96,671.29 1577.96,668.70 1580.00,668.70 1580.00,677.36 1582.04,677.36 1582.04,705.93 1584.08,705.93 1584.08,704.20 1586.11,704.20 1586.11,704.20 1588.15,704.20 1588.15,704.20 1590.19,704.20 1590.19,704.20 1592.23,704.20 1592.23,704.20 1594.26,704.20 1594.26,704.20 1596.30,704.20 1596.30,704.20 1598.34,704.20 1598.34,704.20 1600.38,704.20 1600.38,704.20 1602.41,704.20 1602.41,704.20 1604.45,704.20 1604.45,704.20 1606.49,704.20 1606.49,704.20 1608.53,704.20 1608.53,704.20 1610.56,704.20 1610.56,704.20 1612.60,704.20 1612.60,704.20 1614.64,704.20 1614.64,675.62 1616.68,675.62 1616.68,674.76 1618.71,674.76 1618.71,673.89 1620.75,673.89 1620.75,663.50 1622.79,663.50 1622.79,672.16 1624.83,672.16 1624.83,679.95 1626.86,679.95 1626.86,675.62 1628.90,675.62 1628.90,677.36 1630.94,677.36 1630.94,684.28 1632.98,684.28 1632.98,674.76 1635.01,674.76 1635.01,678.22 1637.05,678.22 1637.05,674.76 1639.09,674.76 1639.09,672.16 1641.12,672.16 1641.12,663.50 1643.16,663.50 1643.16,673.03 1645.20,673.03 1645.20,689.48 1647.24,689.48 1647.24,705.07 1649.28,705.07 1649.28,704.20 1651.31,704.20 1651.31,704.20 1653.35,704.20 1653.35,704.20 1655.39,704.20 1655.39,704.20 1657.43,704.20 1657.43,704.20 1659.46,704.20 1659.46,704.20 1661.50,704.20 1661.50,704.20 1663.54,704.20 1663.54,704.20 1665.58,704.20 1665.58,704.20 1667.61,704.20 1667.61,704.20 1669.65,704.20 1669.65,704.20 1671.69,704.20 1671.69,704.20 1673.73,704.20 1673.73,704.20 1675.76,704.20 1675.76,704.20 1677.80,704.20 1677.80,704.20 1679.84,704.20 1679.84,682.55 1681.88,682.55 1681.88,669.56 1683.91,669.56 1683.91,687.75 1685.95,687.75 1685.95,668.70 1687.99,668.70 1687.99,678.22 1690.03,678.22 1690.03,684.28 1692.06,684.28 1692.06,674.76 1694.10,674.76 1694.10,668.70 1696.14,668.70 1696.14,677.36 1698.18,677.36 1698.18,688.61 1700.21,688.61 1700.21,684.28 1702.25,684.28 1702.25,680.82 1704.29,680.82 1704.29,667.83 1706.33,667.83 1706.33,679.95 1708.36,679.95 1708.36,672.16 1710.40,672.16 1710.40,682.55 1712.44,682.55 1712.44,705.93 1714.48,705.93 1714.48,705.07 1716.51,705.07 1716.51,705.07 1718.55,705.07 1718.55,704.20 1720.59,704.20 1720.59,705.07 1722.62,705.07 1722.62,705.07 1724.66,705.07 1724.66,705.50 1726.70,705.50 1726.70,704.63 1728.74,704.63 1728.74,705.93 1730.78,705.93 1730.78,705.93 1732.81,705.93 1732.81,705.50 1734.85,705.50 1734.85,705.93 1736.89,705.93 1736.89,704.20 1738.93,704.20 1738.93,704.63 1740.96,704.63 1740.96,704.63 1743.00,704.63 1743.00,704.63 1745.04,704.63 1745.04,693.81 1747.08,693.81 1747.08,673.89 1749.11,673.89 1749.11,670.43 1751.15,670.43 1751.15,674.76 1753.19,674.76 1753.19,676.49 1755.23,676.49 1755.23,676.49 1757.26,676.49 1757.26,672.16 1759.30,672.16 1759.30,678.22 1761.34,678.22 1761.34,686.02 1763.38,686.02 1763.38,682.55 1765.41,682.55 1765.41,668.70 1767.45,668.70 1767.45,674.76 1769.49,674.76 1769.49,647.91 1771.53,647.91 1771.53,679.95 1773.56,679.95 1773.56,678.22 1775.60,678.22 1775.60,675.62 1777.64,675.62 1777.64,703.34 1779.68,703.34 1779.68,705.93 1781.71,705.93 1781.71,705.07 1783.75,705.07 1783.75,705.50 1785.79,705.50 1785.79,705.93 1787.83,705.93 1787.83,704.20 1789.86,704.20 1789.86,705.93 1791.90,705.93 1791.90,705.93 1793.94,705.93 1793.94,705.93 1795.98,705.93 1795.98,704.63 1798.01,704.63 1798.01,704.63 1800.05,704.63 1800.05,705.50 1802.09,705.50 1802.09,705.07 1804.12,705.07 1804.12,705.93 1806.16,705.93 1806.16,705.93 1808.20,705.93" fill="none" stroke="#4848FF" stroke-width="1.15" stroke-linejoin="round"/>
<rect x="1546.90" y="620.20" width="263.74" height="87.20" fill="none" stroke="#808080" stroke-width="1.5"/>
<text x="1543.90" y="710.90" font-size="12.2" fill="#545454" font-family="'Liberation Serif', serif" text-anchor="end" textLength="6.60" lengthAdjust="spacingAndGlyphs" >0</text>
<text x="1543.90" y="689.35" font-size="12.2" fill="#545454" font-family="'Liberation Serif', serif" text-anchor="end" textLength="13.20" lengthAdjust="spacingAndGlyphs" >25</text>
<text x="1543.90" y="667.80" font-size="12.2" fill="#545454" font-family="'Liberation Serif', serif" text-anchor="end" textLength="13.20" lengthAdjust="spacingAndGlyphs" >50</text>
<text x="1543.90" y="646.25" font-size="12.2" fill="#545454" font-family="'Liberation Serif', serif" text-anchor="end" textLength="13.20" lengthAdjust="spacingAndGlyphs" >75</text>
<text x="1543.90" y="624.70" font-size="12.2" fill="#545454" font-family="'Liberation Serif', serif" text-anchor="end" textLength="19.80" lengthAdjust="spacingAndGlyphs" >100</text>
<text x="1547.40" y="721.00" font-size="12.2" fill="#545454" font-family="'Liberation Serif', serif" text-anchor="middle" textLength="6.60" lengthAdjust="spacingAndGlyphs" >0</text>
<text x="1588.15" y="721.00" font-size="12.2" fill="#545454" font-family="'Liberation Serif', serif" text-anchor="middle" textLength="13.20" lengthAdjust="spacingAndGlyphs" >20</text>
<text x="1628.90" y="721.00" font-size="12.2" fill="#545454" font-family="'Liberation Serif', serif" text-anchor="middle" textLength="13.20" lengthAdjust="spacingAndGlyphs" >40</text>
<text x="1669.65" y="721.00" font-size="12.2" fill="#545454" font-family="'Liberation Serif', serif" text-anchor="middle" textLength="13.20" lengthAdjust="spacingAndGlyphs" >60</text>
<text x="1710.40" y="721.00" font-size="12.2" fill="#545454" font-family="'Liberation Serif', serif" text-anchor="middle" textLength="13.20" lengthAdjust="spacingAndGlyphs" >80</text>
<text x="1751.15" y="721.00" font-size="12.2" fill="#545454" font-family="'Liberation Serif', serif" text-anchor="middle" textLength="19.80" lengthAdjust="spacingAndGlyphs" >100</text>
<text x="1791.90" y="721.00" font-size="12.2" fill="#545454" font-family="'Liberation Serif', serif" text-anchor="middle" textLength="19.80" lengthAdjust="spacingAndGlyphs" >120</text>
<rect x="1724.70" y="628.50" width="14" height="11" fill="#FFFFFF" stroke="#CCCCCC" stroke-width="1"/>
<rect x="1726.20" y="630.00" width="11" height="8" fill="#0000FF"/>
<text x="1742.60" y="638.40" font-size="11.9" fill="#8A8A8A" font-family="'Liberation Serif', serif" textLength="61.60" lengthAdjust="spacingAndGlyphs" >aida12 Stat</text>
<path d="M1808.20 610.80 L1818.40 621.00 L1808.20 631.20 L1798.00 621.00 Z" fill="#FF0000"/>
<rect x="159.65" y="742.20" width="1" height="87.20" fill="#E9E9E9"/>
<rect x="200.40" y="742.20" width="1" height="87.20" fill="#E9E9E9"/>
<rect x="241.15" y="742.20" width="1" height="87.20" fill="#E9E9E9"/>
<rect x="281.90" y="742.20" width="1" height="87.20" fill="#E9E9E9"/>
<rect x="322.65" y="742.20" width="1" height="87.20" fill="#E9E9E9"/>
<rect x="363.40" y="742.20" width="1" height="87.20" fill="#E9E9E9"/>
<rect x="119.40" y="807.10" width="263.25" height="1" fill="#E9E9E9"/>
<rect x="119.40" y="785.30" width="263.25" height="1" fill="#E9E9E9"/>
<rect x="119.40" y="763.50" width="263.25" height="1" fill="#E9E9E9"/>
<polyline points="119.40,828.80 119.40,827.93 121.44,827.93 121.44,797.62 123.48,797.62 123.48,797.62 125.51,797.62 125.51,787.23 127.55,787.23 127.55,805.42 129.59,805.42 129.59,790.70 131.62,790.70 131.62,799.36 133.66,799.36 133.66,813.21 135.70,813.21 135.70,796.76 137.74,796.76 137.74,792.43 139.78,792.43 139.78,783.77 141.81,783.77 141.81,794.16 143.85,794.16 143.85,795.89 145.89,795.89 145.89,804.55 147.93,804.55 147.93,797.62 149.96,797.62 149.96,797.62 152.00,797.62 152.00,792.43 154.04,792.43 154.04,826.20 156.08,826.20 156.08,827.93 158.11,827.93 158.11,826.63 160.15,826.63 160.15,826.20 162.19,826.20 162.19,827.07 164.23,827.07 164.23,826.20 166.26,826.20 166.26,827.07 168.30,827.07 168.30,826.63 170.34,826.63 170.34,827.50 172.38,827.50 172.38,824.47 174.41,824.47 174.41,827.07 176.45,827.07 176.45,827.93 178.49,827.93 178.49,826.63 180.53,826.63 180.53,827.50 182.56,827.50 182.56,827.93 184.60,827.93 184.60,827.07 186.64,827.07 186.64,798.49 188.68,798.49 188.68,796.76 190.71,796.76 190.71,801.95 192.75,801.95 192.75,790.70 194.79,790.70 194.79,792.43 196.82,792.43 196.82,792.43 198.86,792.43 198.86,797.62 200.90,797.62 200.90,799.36 202.94,799.36 202.94,805.42 204.98,805.42 204.98,799.36 207.01,799.36 207.01,806.28 209.05,806.28 209.05,790.70 211.09,790.70 211.09,788.96 213.12,788.96 213.12,787.23 215.16,787.23 215.16,787.23 217.20,787.23 217.20,799.36 219.24,799.36 219.24,826.20 221.28,826.20 221.28,827.93 223.31,827.93 223.31,827.93 225.35,827.93 225.35,827.50 227.39,827.50 227.39,827.07 229.43,827.07 229.43,827.93 231.46,827.93 231.46,827.50 233.50,827.50 233.50,827.50 235.54,827.50 235.54,827.50 237.58,827.50 237.58,827.07 239.61,827.07 239.61,827.50 241.65,827.50 241.65,827.93 243.69,827.93 243.69,827.93 245.73,827.93 245.73,827.50 247.76,827.50 247.76,827.93 249.80,827.93 249.80,827.50 251.84,827.50 251.84,798.49 253.88,798.49 253.88,791.56 255.91,791.56 255.91,788.96 257.95,788.96 257.95,788.96 259.99,788.96 259.99,820.14 262.02,820.14 262.02,784.63 264.06,784.63 264.06,793.29 266.10,793.29 266.10,783.77 268.14,783.77 268.14,793.29 270.18,793.29 270.18,795.89 272.21,795.89 272.21,800.22 274.25,800.22 274.25,801.95 276.29,801.95 276.29,790.70 278.33,790.70 278.33,795.89 280.36,795.89 280.36,795.89 282.40,795.89 282.40,795.89 284.44,795.89 284.44,827.07 286.48,827.07 286.48,827.93 288.51,827.93 288.51,827.93 290.55,827.93 290.55,827.50 292.59,827.50 292.59,827.07 294.62,827.07 294.62,827.93 296.66,827.93 296.66,827.07 298.70,827.07 298.70,827.50 300.74,827.50 300.74,827.07 302.77,827.07 302.77,826.63 304.81,826.63 304.81,827.93 306.85,827.93 306.85,827.93 308.89,827.93 308.89,827.07 310.93,827.07 310.93,826.20 312.96,826.20 312.96,827.93 315.00,827.93 315.00,827.93 317.04,827.93 317.04,802.82 319.08,802.82 319.08,792.43 321.11,792.43 321.11,808.02 323.15,808.02 323.15,793.29 325.19,793.29 325.19,793.29 327.23,793.29 327.23,789.83 329.26,789.83 329.26,795.89 331.30,795.89 331.30,792.43 333.34,792.43 333.34,801.09 335.38,801.09 335.38,789.83 337.41,789.83 337.41,797.62 339.45,797.62 339.45,784.63 341.49,784.63 341.49,775.97 343.52,775.97 343.52,800.22 345.56,800.22 345.56,793.29 347.60,793.29 347.60,793.29 349.64,793.29 349.64,825.34 351.68,825.34 351.68,827.50 353.71,827.50 353.71,826.20 355.75,826.20 355.75,827.93 357.79,827.93 357.79,827.93 359.83,827.93 359.83,827.07 361.86,827.07 361.86,827.07 363.90,827.07 363.90,827.93 365.94,827.93 365.94,827.07 367.98,827.07 367.98,827.93 370.01,827.93 370.01,827.50 372.05,827.50 372.05,827.50 374.09,827.50 374.09,826.63 376.12,826.63 376.12,827.93 378.16,827.93 378.16,827.93 380.20,827.93" fill="none" stroke="#4848FF" stroke-width="1.15" stroke-linejoin="round"/>
<rect x="118.90" y="742.20" width="263.75" height="87.20" fill="none" stroke="#808080" stroke-width="1.5"/>
<text x="114.90" y="832.90" font-size="12.2" fill="#545454" font-family="'Liberation Serif', serif" text-anchor="end" textLength="6.60" lengthAdjust="spacingAndGlyphs" >0</text>
<text x="114.90" y="811.35" font-size="12.2" fill="#545454" font-family="'Liberation Serif', serif" text-anchor="end" textLength="13.20" lengthAdjust="spacingAndGlyphs" >25</text>
<text x="114.90" y="789.80" font-size="12.2" fill="#545454" font-family="'Liberation Serif', serif" text-anchor="end" textLength="13.20" lengthAdjust="spacingAndGlyphs" >50</text>
<text x="114.90" y="768.25" font-size="12.2" fill="#545454" font-family="'Liberation Serif', serif" text-anchor="end" textLength="13.20" lengthAdjust="spacingAndGlyphs" >75</text>
<text x="114.90" y="746.70" font-size="12.2" fill="#545454" font-family="'Liberation Serif', serif" text-anchor="end" textLength="19.80" lengthAdjust="spacingAndGlyphs" >100</text>
<text x="119.40" y="843.00" font-size="12.2" fill="#545454" font-family="'Liberation Serif', serif" text-anchor="middle" textLength="6.60" lengthAdjust="spacingAndGlyphs" >0</text>
<text x="160.15" y="843.00" font-size="12.2" fill="#545454" font-family="'Liberation Serif', serif" text-anchor="middle" textLength="13.20" lengthAdjust="spacingAndGlyphs" >20</text>
<text x="200.90" y="843.00" font-size="12.2" fill="#545454" font-family="'Liberation Serif', serif" text-anchor="middle" textLength="13.20" lengthAdjust="spacingAndGlyphs" >40</text>
<text x="241.65" y="843.00" font-size="12.2" fill="#545454" font-family="'Liberation Serif', serif" text-anchor="middle" textLength="13.20" lengthAdjust="spacingAndGlyphs" >60</text>
<text x="282.40" y="843.00" font-size="12.2" fill="#545454" font-family="'Liberation Serif', serif" text-anchor="middle" textLength="13.20" lengthAdjust="spacingAndGlyphs" >80</text>
<text x="323.15" y="843.00" font-size="12.2" fill="#545454" font-family="'Liberation Serif', serif" text-anchor="middle" textLength="19.80" lengthAdjust="spacingAndGlyphs" >100</text>
<text x="363.90" y="843.00" font-size="12.2" fill="#545454" font-family="'Liberation Serif', serif" text-anchor="middle" textLength="19.80" lengthAdjust="spacingAndGlyphs" >120</text>
<rect x="295.70" y="750.50" width="14" height="11" fill="#FFFFFF" stroke="#CCCCCC" stroke-width="1"/>
<rect x="297.20" y="752.00" width="11" height="8" fill="#0000FF"/>
<text x="313.60" y="760.40" font-size="11.9" fill="#8A8A8A" font-family="'Liberation Serif', serif" textLength="61.60" lengthAdjust="spacingAndGlyphs" >aida13 Stat</text>
<path d="M380.20 732.80 L390.40 743.00 L380.20 753.20 L370.00 743.00 Z" fill="#FF0000"/>
<rect x="635.65" y="742.20" width="1" height="87.20" fill="#E9E9E9"/>
<rect x="676.40" y="742.20" width="1" height="87.20" fill="#E9E9E9"/>
<rect x="717.15" y="742.20" width="1" height="87.20" fill="#E9E9E9"/>
<rect x="757.90" y="742.20" width="1" height="87.20" fill="#E9E9E9"/>
<rect x="798.65" y="742.20" width="1" height="87.20" fill="#E9E9E9"/>
<rect x="839.40" y="742.20" width="1" height="87.20" fill="#E9E9E9"/>
<rect x="595.40" y="807.10" width="263.25" height="1" fill="#E9E9E9"/>
<rect x="595.40" y="785.30" width="263.25" height="1" fill="#E9E9E9"/>
<rect x="595.40" y="763.50" width="263.25" height="1" fill="#E9E9E9"/>
<polyline points="595.40,828.80 595.40,828.80 597.44,828.80 597.44,802.82 599.48,802.82 599.48,797.62 601.51,797.62 601.51,785.50 603.55,785.50 603.55,795.89 605.59,795.89 605.59,801.09 607.62,801.09 607.62,798.49 609.66,798.49 609.66,803.69 611.70,803.69 611.70,808.88 613.74,808.88 613.74,800.22 615.77,800.22 615.77,796.76 617.81,796.76 617.81,788.10 619.85,788.10 619.85,801.95 621.89,801.95 621.89,801.95 623.92,801.95 623.92,790.70 625.96,790.70 625.96,797.62 628.00,797.62 628.00,802.82 630.04,802.82 630.04,827.07 632.07,827.07 632.07,827.07 634.11,827.07 634.11,827.07 636.15,827.07 636.15,826.20 638.19,826.20 638.19,826.20 640.23,826.20 640.23,827.93 642.26,827.93 642.26,824.47 644.30,824.47 644.30,826.63 646.34,826.63 646.34,826.63 648.38,826.63 648.38,826.20 650.41,826.20 650.41,827.07 652.45,827.07 652.45,827.07 654.49,827.07 654.49,826.20 656.52,826.20 656.52,827.50 658.56,827.50 658.56,826.63 660.60,826.63 660.60,827.07 662.64,827.07 662.64,793.29 664.67,793.29 664.67,793.29 666.71,793.29 666.71,808.02 668.75,808.02 668.75,793.29 670.79,793.29 670.79,791.56 672.82,791.56 672.82,788.96 674.86,788.96 674.86,787.23 676.90,787.23 676.90,782.90 678.94,782.90 678.94,797.62 680.98,797.62 680.98,798.49 683.01,798.49 683.01,802.82 685.05,802.82 685.05,809.75 687.09,809.75 687.09,798.49 689.12,798.49 689.12,797.62 691.16,797.62 691.16,787.23 693.20,787.23 693.20,786.37 695.24,786.37 695.24,827.07 697.27,827.07 697.27,827.93 699.31,827.93 699.31,827.50 701.35,827.50 701.35,826.63 703.39,826.63 703.39,827.07 705.42,827.07 705.42,826.63 707.46,826.63 707.46,827.93 709.50,827.93 709.50,827.93 711.54,827.93 711.54,826.20 713.58,826.20 713.58,826.20 715.61,826.20 715.61,826.63 717.65,826.63 717.65,827.07 719.69,827.07 719.69,825.34 721.73,825.34 721.73,826.63 723.76,826.63 723.76,827.07 725.80,827.07 725.80,826.63 727.84,826.63 727.84,800.22 729.88,800.22 729.88,808.02 731.91,808.02 731.91,796.76 733.95,796.76 733.95,797.62 735.99,797.62 735.99,803.69 738.02,803.69 738.02,799.36 740.06,799.36 740.06,788.96 742.10,788.96 742.10,800.22 744.14,800.22 744.14,801.09 746.17,801.09 746.17,812.35 748.21,812.35 748.21,796.76 750.25,796.76 750.25,812.35 752.29,812.35 752.29,795.03 754.33,795.03 754.33,795.03 756.36,795.03 756.36,785.50 758.40,785.50 758.40,791.56 760.44,791.56 760.44,827.07 762.48,827.07 762.48,824.47 764.51,824.47 764.51,826.63 766.55,826.63 766.55,826.20 768.59,826.20 768.59,827.07 770.62,827.07 770.62,827.93 772.66,827.93 772.66,827.07 774.70,827.07 774.70,826.20 776.74,826.20 776.74,827.07 778.77,827.07 778.77,827.07 780.81,827.07 780.81,826.20 782.85,826.20 782.85,826.20 784.89,826.20 784.89,826.20 786.92,826.20 786.92,827.93 788.96,827.93 788.96,826.20 791.00,826.20 791.00,826.63 793.04,826.63 793.04,811.48 795.08,811.48 795.08,808.02 797.11,808.02 797.11,814.94 799.15,814.94 799.15,795.89 801.19,795.89 801.19,795.89 803.23,795.89 803.23,777.71 805.26,777.71 805.26,795.03 807.30,795.03 807.30,795.03 809.34,795.03 809.34,807.15 811.38,807.15 811.38,799.36 813.41,799.36 813.41,797.62 815.45,797.62 815.45,782.04 817.49,782.04 817.49,796.76 819.52,796.76 819.52,796.76 821.56,796.76 821.56,796.76 823.60,796.76 823.60,793.29 825.64,793.29 825.64,827.93 827.67,827.93 827.67,827.07 829.71,827.07 829.71,826.20 831.75,826.20 831.75,826.63 833.79,826.63 833.79,826.63 835.83,826.63 835.83,826.63 837.86,826.63 837.86,826.63 839.90,826.63 839.90,827.93 841.94,827.93 841.94,827.93 843.98,827.93 843.98,827.93 846.01,827.93 846.01,827.93 848.05,827.93 848.05,827.93 850.09,827.93 850.09,826.63 852.12,826.63 852.12,827.50 854.16,827.50 854.16,827.93 856.20,827.93" fill="none" stroke="#4848FF" stroke-width="1.15" stroke-linejoin="round"/>
<rect x="594.90" y="742.20" width="263.75" height="87.20" fill="none" stroke="#808080" stroke-width="1.5"/>
<text x="591.90" y="832.90" font-size="12.2" fill="#545454" font-family="'Liberation Serif', serif" text-anchor="end" textLength="6.60" lengthAdjust="spacingAndGlyphs" >0</text>
<text x="591.90" y="811.35" font-size="12.2" fill="#545454" font-family="'Liberation Serif', serif" text-anchor="end" textLength="13.20" lengthAdjust="spacingAndGlyphs" >25</text>
<text x="591.90" y="789.80" font-size="12.2" fill="#545454" font-family="'Liberation Serif', serif" text-anchor="end" textLength="13.20" lengthAdjust="spacingAndGlyphs" >50</text>
<text x="591.90" y="768.25" font-size="12.2" fill="#545454" font-family="'Liberation Serif', serif" text-anchor="end" textLength="13.20" lengthAdjust="spacingAndGlyphs" >75</text>
<text x="591.90" y="746.70" font-size="12.2" fill="#545454" font-family="'Liberation Serif', serif" text-anchor="end" textLength="19.80" lengthAdjust="spacingAndGlyphs" >100</text>
<text x="595.40" y="843.00" font-size="12.2" fill="#545454" font-family="'Liberation Serif', serif" text-anchor="middle" textLength="6.60" lengthAdjust="spacingAndGlyphs" >0</text>
<text x="636.15" y="843.00" font-size="12.2" fill="#545454" font-family="'Liberation Serif', serif" text-anchor="middle" textLength="13.20" lengthAdjust="spacingAndGlyphs" >20</text>
<text x="676.90" y="843.00" font-size="12.2" fill="#545454" font-family="'Liberation Serif', serif" text-anchor="middle" textLength="13.20" lengthAdjust="spacingAndGlyphs" >40</text>
<text x="717.65" y="843.00" font-size="12.2" fill="#545454" font-family="'Liberation Serif', serif" text-anchor="middle" textLength="13.20" lengthAdjust="spacingAndGlyphs" >60</text>
<text x="758.40" y="843.00" font-size="12.2" fill="#545454" font-family="'Liberation Serif', serif" text-anchor="middle" textLength="13.20" lengthAdjust="spacingAndGlyphs" >80</text>
<text x="799.15" y="843.00" font-size="12.2" fill="#545454" font-family="'Liberation Serif', serif" text-anchor="middle" textLength="19.80" lengthAdjust="spacingAndGlyphs" >100</text>
<text x="839.90" y="843.00" font-size="12.2" fill="#545454" font-family="'Liberation Serif', serif" text-anchor="middle" textLength="19.80" lengthAdjust="spacingAndGlyphs" >120</text>
<rect x="772.70" y="750.50" width="14" height="11" fill="#FFFFFF" stroke="#CCCCCC" stroke-width="1"/>
<rect x="774.20" y="752.00" width="11" height="8" fill="#0000FF"/>
<text x="790.60" y="760.40" font-size="11.9" fill="#8A8A8A" font-family="'Liberation Serif', serif" textLength="61.60" lengthAdjust="spacingAndGlyphs" >aida14 Stat</text>
<path d="M856.20 732.80 L866.40 743.00 L856.20 753.20 L846.00 743.00 Z" fill="#FF0000"/>
<rect x="1111.65" y="742.20" width="1" height="87.20" fill="#E9E9E9"/>
<rect x="1152.40" y="742.20" width="1" height="87.20" fill="#E9E9E9"/>
<rect x="1193.15" y="742.20" width="1" height="87.20" fill="#E9E9E9"/>
<rect x="1233.90" y="742.20" width="1" height="87.20" fill="#E9E9E9"/>
<rect x="1274.65" y="742.20" width="1" height="87.20" fill="#E9E9E9"/>
<rect x="1315.40" y="742.20" width="1" height="87.20" fill="#E9E9E9"/>
<rect x="1071.40" y="807.10" width="263.24" height="1" fill="#E9E9E9"/>
<rect x="1071.40" y="785.30" width="263.24" height="1" fill="#E9E9E9"/>
<rect x="1071.40" y="763.50" width="263.24" height="1" fill="#E9E9E9"/>
<polyline points="1071.40,828.80 1071.40,828.80 1073.44,828.80 1073.44,804.55 1075.48,804.55 1075.48,808.02 1077.51,808.02 1077.51,783.77 1079.55,783.77 1079.55,796.76 1081.59,796.76 1081.59,810.61 1083.62,810.61 1083.62,819.27 1085.66,819.27 1085.66,812.35 1087.70,812.35 1087.70,808.88 1089.74,808.88 1089.74,801.09 1091.78,801.09 1091.78,802.82 1093.81,802.82 1093.81,807.15 1095.85,807.15 1095.85,807.15 1097.89,807.15 1097.89,805.42 1099.93,805.42 1099.93,807.15 1101.96,807.15 1101.96,805.42 1104.00,805.42 1104.00,801.09 1106.04,801.09 1106.04,827.07 1108.08,827.07 1108.08,827.07 1110.11,827.07 1110.11,826.20 1112.15,826.20 1112.15,827.07 1114.19,827.07 1114.19,827.07 1116.23,827.07 1116.23,827.93 1118.26,827.93 1118.26,826.63 1120.30,826.63 1120.30,827.93 1122.34,827.93 1122.34,826.63 1124.38,826.63 1124.38,827.07 1126.41,827.07 1126.41,826.63 1128.45,826.63 1128.45,827.93 1130.49,827.93 1130.49,827.07 1132.53,827.07 1132.53,827.50 1134.56,827.50 1134.56,827.93 1136.60,827.93 1136.60,827.07 1138.64,827.07 1138.64,808.02 1140.68,808.02 1140.68,803.69 1142.71,803.69 1142.71,801.95 1144.75,801.95 1144.75,809.75 1146.79,809.75 1146.79,808.02 1148.83,808.02 1148.83,800.22 1150.86,800.22 1150.86,797.62 1152.90,797.62 1152.90,801.09 1154.94,801.09 1154.94,805.42 1156.98,805.42 1156.98,808.02 1159.01,808.02 1159.01,805.42 1161.05,805.42 1161.05,821.87 1163.09,821.87 1163.09,818.41 1165.12,818.41 1165.12,807.15 1167.16,807.15 1167.16,808.02 1169.20,808.02 1169.20,822.74 1171.24,822.74 1171.24,827.07 1173.28,827.07 1173.28,826.20 1175.31,826.20 1175.31,827.93 1177.35,827.93 1177.35,826.63 1179.39,826.63 1179.39,827.07 1181.43,827.07 1181.43,827.07 1183.46,827.07 1183.46,827.93 1185.50,827.93 1185.50,826.63 1187.54,826.63 1187.54,827.07 1189.58,827.07 1189.58,827.93 1191.61,827.93 1191.61,826.63 1193.65,826.63 1193.65,826.63 1195.69,826.63 1195.69,827.07 1197.73,827.07 1197.73,827.50 1199.76,827.50 1199.76,826.20 1201.80,826.20 1201.80,827.93 1203.84,827.93 1203.84,802.82 1205.88,802.82 1205.88,805.42 1207.91,805.42 1207.91,802.82 1209.95,802.82 1209.95,803.69 1211.99,803.69 1211.99,815.81 1214.03,815.81 1214.03,805.42 1216.06,805.42 1216.06,805.42 1218.10,805.42 1218.10,808.02 1220.14,808.02 1220.14,809.75 1222.18,809.75 1222.18,808.88 1224.21,808.88 1224.21,824.47 1226.25,824.47 1226.25,810.61 1228.29,810.61 1228.29,805.42 1230.33,805.42 1230.33,807.15 1232.36,807.15 1232.36,807.15 1234.40,807.15 1234.40,807.15 1236.44,807.15 1236.44,827.07 1238.48,827.07 1238.48,826.20 1240.51,826.20 1240.51,827.50 1242.55,827.50 1242.55,827.93 1244.59,827.93 1244.59,826.63 1246.62,826.63 1246.62,826.20 1248.66,826.20 1248.66,827.93 1250.70,827.93 1250.70,827.93 1252.74,827.93 1252.74,826.63 1254.78,826.63 1254.78,826.63 1256.81,826.63 1256.81,827.07 1258.85,827.07 1258.85,827.07 1260.89,827.07 1260.89,826.20 1262.93,826.20 1262.93,827.07 1264.96,827.07 1264.96,827.93 1267.00,827.93 1267.00,827.07 1269.04,827.07 1269.04,742.20 1271.08,742.20 1271.08,814.08 1273.11,814.08 1273.11,801.95 1275.15,801.95 1275.15,797.62 1277.19,797.62 1277.19,742.20 1279.23,742.20 1279.23,800.22 1281.26,800.22 1281.26,799.36 1283.30,799.36 1283.30,828.80 1285.34,828.80 1285.34,813.21 1287.38,813.21 1287.38,808.02 1289.41,808.02 1289.41,808.02 1291.45,808.02 1291.45,742.20 1293.49,742.20 1293.49,791.56 1295.53,791.56 1295.53,808.02 1297.56,808.02 1297.56,814.94 1299.60,814.94 1299.60,814.94 1301.64,814.94 1301.64,827.07 1303.68,827.07 1303.68,826.63 1305.71,826.63 1305.71,827.50 1307.75,827.50 1307.75,826.20 1309.79,826.20 1309.79,827.93 1311.83,827.93 1311.83,827.07 1313.86,827.07 1313.86,826.63 1315.90,826.63 1315.90,826.63 1317.94,826.63 1317.94,827.93 1319.98,827.93 1319.98,827.93 1322.01,827.93 1322.01,827.07 1324.05,827.07 1324.05,827.93 1326.09,827.93 1326.09,827.50 1328.12,827.50 1328.12,824.47 1330.16,824.47 1330.16,825.34 1332.20,825.34" fill="none" stroke="#4848FF" stroke-width="1.15" stroke-linejoin="round"/>
<rect x="1070.90" y="742.20" width="263.74" height="87.20" fill="none" stroke="#808080" stroke-width="1.5"/>
<text x="1067.90" y="832.90" font-size="12.2" fill="#545454" font-family="'Liberation Serif', serif" text-anchor="end" textLength="6.60" lengthAdjust="spacingAndGlyphs" >0</text>
<text x="1067.90" y="811.35" font-size="12.2" fill="#545454" font-family="'Liberation Serif', serif" text-anchor="end" textLength="13.20" lengthAdjust="spacingAndGlyphs" >25</text>
<text x="1067.90" y="789.80" font-size="12.2" fill="#545454" font-family="'Liberation Serif', serif" text-anchor="end" textLength="13.20" lengthAdjust="spacingAndGlyphs" >50</text>
<text x="1067.90" y="768.25" font-size="12.2" fill="#545454" font-family="'Liberation Serif', serif" text-anchor="end" textLength="13.20" lengthAdjust="spacingAndGlyphs" >75</text>
<text x="1067.90" y="746.70" font-size="12.2" fill="#545454" font-family="'Liberation Serif', serif" text-anchor="end" textLength="19.80" lengthAdjust="spacingAndGlyphs" >100</text>
<text x="1071.40" y="843.00" font-size="12.2" fill="#545454" font-family="'Liberation Serif', serif" text-anchor="middle" textLength="6.60" lengthAdjust="spacingAndGlyphs" >0</text>
<text x="1112.15" y="843.00" font-size="12.2" fill="#545454" font-family="'Liberation Serif', serif" text-anchor="middle" textLength="13.20" lengthAdjust="spacingAndGlyphs" >20</text>
<text x="1152.90" y="843.00" font-size="12.2" fill="#545454" font-family="'Liberation Serif', serif" text-anchor="middle" textLength="13.20" lengthAdjust="spacingAndGlyphs" >40</text>
<text x="1193.65" y="843.00" font-size="12.2" fill="#545454" font-family="'Liberation Serif', serif" text-anchor="middle" textLength="13.20" lengthAdjust="spacingAndGlyphs" >60</text>
<text x="1234.40" y="843.00" font-size="12.2" fill="#545454" font-family="'Liberation Serif', serif" text-anchor="middle" textLength="13.20" lengthAdjust="spacingAndGlyphs" >80</text>
<text x="1275.15" y="843.00" font-size="12.2" fill="#545454" font-family="'Liberation Serif', serif" text-anchor="middle" textLength="19.80" lengthAdjust="spacingAndGlyphs" >100</text>
<text x="1315.90" y="843.00" font-size="12.2" fill="#545454" font-family="'Liberation Serif', serif" text-anchor="middle" textLength="19.80" lengthAdjust="spacingAndGlyphs" >120</text>
<rect x="1248.70" y="750.50" width="14" height="11" fill="#FFFFFF" stroke="#CCCCCC" stroke-width="1"/>
<rect x="1250.20" y="752.00" width="11" height="8" fill="#0000FF"/>
<text x="1266.60" y="760.40" font-size="11.9" fill="#8A8A8A" font-family="'Liberation Serif', serif" textLength="61.60" lengthAdjust="spacingAndGlyphs" >aida15 Stat</text>
<path d="M1332.20 732.80 L1342.40 743.00 L1332.20 753.20 L1322.00 743.00 Z" fill="#FF0000"/>
<rect x="1587.65" y="742.20" width="1" height="87.20" fill="#DCDCDC"/>
<rect x="1628.40" y="742.20" width="1" height="87.20" fill="#DCDCDC"/>
<rect x="1669.15" y="742.20" width="1" height="87.20" fill="#DCDCDC"/>
<rect x="1709.90" y="742.20" width="1" height="87.20" fill="#DCDCDC"/>
<rect x="1750.65" y="742.20" width="1" height="87.20" fill="#DCDCDC"/>
<rect x="1791.40" y="742.20" width="1" height="87.20" fill="#DCDCDC"/>
<rect x="1547.40" y="807.10" width="263.24" height="1" fill="#DCDCDC"/>
<rect x="1547.40" y="785.30" width="263.24" height="1" fill="#DCDCDC"/>
<rect x="1547.40" y="763.50" width="263.24" height="1" fill="#DCDCDC"/>
<polyline points="1547.40,828.80 1547.40,828.80 1549.44,828.80 1549.44,792.43 1551.48,792.43 1551.48,792.43 1553.51,792.43 1553.51,755.19 1555.55,755.19 1555.55,785.50 1557.59,785.50 1557.59,792.43 1559.62,792.43 1559.62,808.88 1561.66,808.88 1561.66,801.09 1563.70,801.09 1563.70,790.70 1565.74,790.70 1565.74,795.03 1567.78,795.03 1567.78,796.76 1569.81,796.76 1569.81,797.62 1571.85,797.62 1571.85,795.03 1573.89,795.03 1573.89,796.76 1575.93,796.76 1575.93,801.95 1577.96,801.95 1577.96,794.16 1580.00,794.16 1580.00,801.09 1582.04,801.09 1582.04,827.07 1584.08,827.07 1584.08,827.50 1586.11,827.50 1586.11,826.63 1588.15,826.63 1588.15,826.63 1590.19,826.63 1590.19,826.63 1592.23,826.63 1592.23,827.50 1594.26,827.50 1594.26,827.07 1596.30,827.07 1596.30,827.07 1598.34,827.07 1598.34,827.93 1600.38,827.93 1600.38,827.93 1602.41,827.93 1602.41,827.07 1604.45,827.07 1604.45,827.93 1606.49,827.93 1606.49,827.07 1608.53,827.07 1608.53,827.50 1610.56,827.50 1610.56,826.63 1612.60,826.63 1612.60,827.93 1614.64,827.93 1614.64,803.69 1616.68,803.69 1616.68,812.35 1618.71,812.35 1618.71,825.34 1620.75,825.34 1620.75,801.09 1622.79,801.09 1622.79,799.36 1624.83,799.36 1624.83,821.87 1626.86,821.87 1626.86,800.22 1628.90,800.22 1628.90,802.82 1630.94,802.82 1630.94,823.60 1632.98,823.60 1632.98,805.42 1635.01,805.42 1635.01,816.68 1637.05,816.68 1637.05,800.22 1639.09,800.22 1639.09,804.55 1641.12,804.55 1641.12,802.82 1643.16,802.82 1643.16,813.21 1645.20,813.21 1645.20,827.93 1647.24,827.93 1647.24,826.63 1649.28,826.63 1649.28,827.93 1651.31,827.93 1651.31,826.63 1653.35,826.63 1653.35,827.07 1655.39,827.07 1655.39,827.50 1657.43,827.50 1657.43,826.63 1659.46,826.63 1659.46,827.07 1661.50,827.07 1661.50,825.34 1663.54,825.34 1663.54,827.50 1665.58,827.50 1665.58,827.07 1667.61,827.07 1667.61,827.07 1669.65,827.07 1669.65,827.07 1671.69,827.07 1671.69,826.20 1673.73,826.20 1673.73,827.93 1675.76,827.93 1675.76,827.07 1677.80,827.07 1677.80,827.93 1679.84,827.93 1679.84,801.95 1681.88,801.95 1681.88,812.35 1683.91,812.35 1683.91,805.42 1685.95,805.42 1685.95,801.09 1687.99,801.09 1687.99,797.62 1690.03,797.62 1690.03,796.76 1692.06,796.76 1692.06,802.82 1694.10,802.82 1694.10,800.22 1696.14,800.22 1696.14,802.82 1698.18,802.82 1698.18,793.29 1700.21,793.29 1700.21,802.82 1702.25,802.82 1702.25,801.95 1704.29,801.95 1704.29,811.48 1706.33,811.48 1706.33,805.42 1708.36,805.42 1708.36,797.62 1710.40,797.62 1710.40,827.93 1712.44,827.93 1712.44,827.50 1714.48,827.50 1714.48,827.93 1716.51,827.93 1716.51,827.07 1718.55,827.07 1718.55,827.93 1720.59,827.93 1720.59,827.50 1722.62,827.50 1722.62,827.07 1724.66,827.07 1724.66,827.93 1726.70,827.93 1726.70,826.20 1728.74,826.20 1728.74,827.07 1730.78,827.07 1730.78,827.07 1732.81,827.07 1732.81,827.50 1734.85,827.50 1734.85,827.07 1736.89,827.07 1736.89,827.93 1738.93,827.93 1738.93,827.93 1740.96,827.93 1740.96,827.93 1743.00,827.93 1743.00,827.07 1745.04,827.07 1745.04,789.83 1747.08,789.83 1747.08,796.76 1749.11,796.76 1749.11,801.09 1751.15,801.09 1751.15,801.09 1753.19,801.09 1753.19,794.16 1755.23,794.16 1755.23,794.16 1757.26,794.16 1757.26,797.62 1759.30,797.62 1759.30,797.62 1761.34,797.62 1761.34,742.20 1763.38,742.20 1763.38,798.49 1765.41,798.49 1765.41,805.42 1767.45,805.42 1767.45,795.89 1769.49,795.89 1769.49,827.93 1771.53,827.93 1771.53,798.49 1773.56,798.49 1773.56,817.54 1775.60,817.54 1775.60,791.56 1777.64,791.56 1777.64,827.93 1779.68,827.93 1779.68,827.93 1781.71,827.93 1781.71,825.34 1783.75,825.34 1783.75,827.93 1785.79,827.93 1785.79,826.63 1787.83,826.63 1787.83,827.07 1789.86,827.07 1789.86,827.50 1791.90,827.50 1791.90,827.50 1793.94,827.50 1793.94,824.47 1795.98,824.47 1795.98,827.93 1798.01,827.93 1798.01,827.07 1800.05,827.07 1800.05,826.20 1802.09,826.20 1802.09,826.63 1804.12,826.63 1804.12,827.07 1806.16,827.07 1806.16,827.50 1808.20,827.50" fill="none" stroke="#4848FF" stroke-width="1.15" stroke-linejoin="round"/>
<rect x="1546.90" y="742.20" width="263.74" height="87.20" fill="none" stroke="#000000" stroke-width="2"/>
<text x="1543.90" y="832.90" font-size="12.2" fill="#545454" font-family="'Liberation Serif', serif" text-anchor="end" textLength="6.60" lengthAdjust="spacingAndGlyphs" >0</text>
<text x="1543.90" y="811.35" font-size="12.2" fill="#545454" font-family="'Liberation Serif', serif" text-anchor="end" textLength="13.20" lengthAdjust="spacingAndGlyphs" >25</text>
<text x="1543.90" y="789.80" font-size="12.2" fill="#545454" font-family="'Liberation Serif', serif" text-anchor="end" textLength="13.20" lengthAdjust="spacingAndGlyphs" >50</text>
<text x="1543.90" y="768.25" font-size="12.2" fill="#545454" font-family="'Liberation Serif', serif" text-anchor="end" textLength="13.20" lengthAdjust="spacingAndGlyphs" >75</text>
<text x="1543.90" y="746.70" font-size="12.2" fill="#545454" font-family="'Liberation Serif', serif" text-anchor="end" textLength="19.80" lengthAdjust="spacingAndGlyphs" >100</text>
<text x="1547.40" y="843.00" font-size="12.2" fill="#545454" font-family="'Liberation Serif', serif" text-anchor="middle" textLength="6.60" lengthAdjust="spacingAndGlyphs" >0</text>
<text x="1588.15" y="843.00" font-size="12.2" fill="#545454" font-family="'Liberation Serif', serif" text-anchor="middle" textLength="13.20" lengthAdjust="spacingAndGlyphs" >20</text>
<text x="1628.90" y="843.00" font-size="12.2" fill="#545454" font-family="'Liberation Serif', serif" text-anchor="middle" textLength="13.20" lengthAdjust="spacingAndGlyphs" >40</text>
<text x="1669.65" y="843.00" font-size="12.2" fill="#545454" font-family="'Liberation Serif', serif" text-anchor="middle" textLength="13.20" lengthAdjust="spacingAndGlyphs" >60</text>
<text x="1710.40" y="843.00" font-size="12.2" fill="#545454" font-family="'Liberation Serif', serif" text-anchor="middle" textLength="13.20" lengthAdjust="spacingAndGlyphs" >80</text>
<text x="1751.15" y="843.00" font-size="12.2" fill="#545454" font-family="'Liberation Serif', serif" text-anchor="middle" textLength="19.80" lengthAdjust="spacingAndGlyphs" >100</text>
<text x="1791.90" y="843.00" font-size="12.2" fill="#545454" font-family="'Liberation Serif', serif" text-anchor="middle" textLength="19.80" lengthAdjust="spacingAndGlyphs" >120</text>
<rect x="1724.70" y="750.50" width="14" height="11" fill="#FFFFFF" stroke="#CCCCCC" stroke-width="1"/>
<rect x="1726.20" y="752.00" width="11" height="8" fill="#0000FF"/>
<text x="1742.60" y="760.40" font-size="11.9" fill="#000000" font-family="'Liberation Serif', serif" textLength="61.60" lengthAdjust="spacingAndGlyphs" >aida16 Stat</text>
<path d="M1808.20 732.80 L1818.40 743.00 L1808.20 753.20 L1798.00 743.00 Z" fill="#00FF00"/>
</svg></body></html>
